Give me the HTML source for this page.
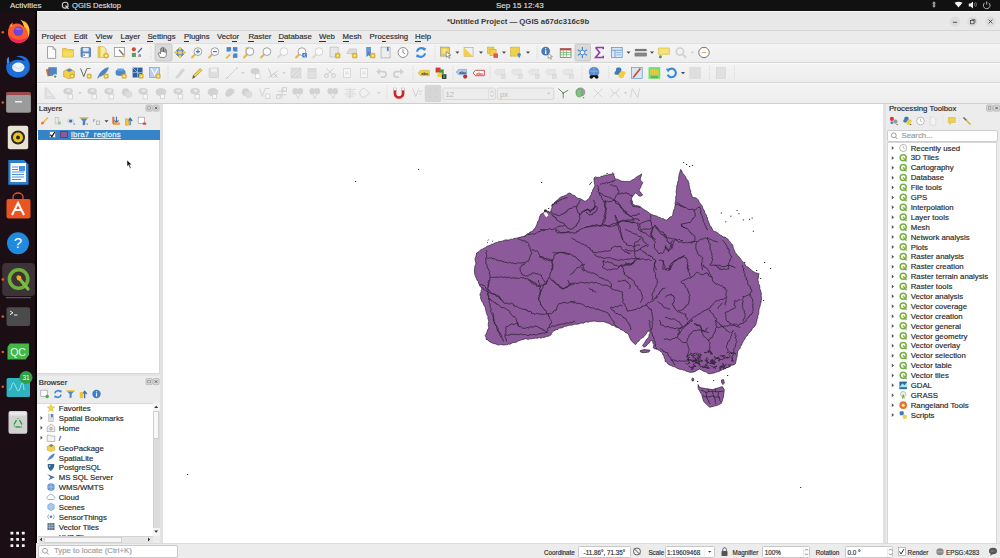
<!DOCTYPE html>
<html><head><meta charset="utf-8"><style>
*{margin:0;padding:0;box-sizing:border-box}
html,body{width:1000px;height:558px;overflow:hidden;background:#fff;font-family:"Liberation Sans",sans-serif;font-size:7.8px;color:#2a2a2a}
.a{position:absolute}
.t{position:absolute;white-space:nowrap;line-height:1;-webkit-text-stroke:0.18px currentColor}
.menu span{position:absolute;top:2.3px;white-space:nowrap;line-height:1;color:#303030;-webkit-text-stroke:0.18px currentColor}
.menu u{text-decoration:none;border-bottom:0.8px solid #303030}
</style></head><body>
<div class="a" style="left:0;top:0;width:1000px;height:11px;background:#121111"></div>
<div class="t" style="left:10px;top:1.6px;color:#e2e2e2;font-size:8px;-webkit-text-stroke:0.1px currentColor">Activities</div>
<svg class="a" style="left:61px;top:1px" width="9" height="9"><circle cx="4.2" cy="4.2" r="2.9" fill="none" stroke="#ccc" stroke-width="1.1"/><path d="M4.5,4.5 L7.5,7.8" stroke="#ccc" stroke-width="1.2"/></svg><div class="t" style="left:72px;top:1.6px;color:#e2e2e2;font-size:7.6px;-webkit-text-stroke:0.1px currentColor">QGIS Desktop</div>
<div class="t" style="left:496px;top:1.6px;color:#e2e2e2;font-size:8px;-webkit-text-stroke:0.1px currentColor">Sep 15 12:43</div>
<div class="a" style="left:0;top:11px;width:36px;height:547px;background:#1b0f15"></div><svg class="a" style="left:0;top:0" width="36" height="558" viewBox="0 0 36 558"><path d="M9.5,26 Q7.5,30 8,34 Q9,41 16,42.8 Q24,44 28,38 Q30.5,33 29,27.5 Q28,23 24,20.5 Q26,25 24,27 Q21,23 16,23.5 Q12,24 9.5,26z" fill="#ff5a2c"/><path d="M8.3,35 Q11,42 18,43 Q25,43 28.3,37 Q22,41 16,39.5 Q11,38 8.3,35z" fill="#f0245e"/><path d="M20.5,19.8 Q27.5,22 29.3,29 Q29.6,34 28.3,37 Q28,29 24,26.5 Q23,22.5 20.5,19.8z" fill="#ffc93a"/><path d="M9.5,26 Q10.5,23.5 13,22.5 Q11.5,25 12.5,27 z" fill="#ff9a2a"/><circle cx="18.3" cy="31.3" r="4.8" fill="#6a47d8"/><path d="M15,29 Q18,27 21.5,29.5 Q18.5,31 15,29z" fill="#9a6af0"/><circle cx="2.8" cy="32.2" r="1.3" fill="#e95420"/><path d="M7.5,61 Q5.5,66 6.5,70 Q8.5,77 17,77.8 Q26,78 29.5,70 Q31,62 26,57.5 Q21,54.5 16,56.5 Q22,57 25,61 Q20,59 15,60 Q10.5,61 9.5,64 Q8.5,62.5 7.5,61z" fill="#1c6fd8"/><path d="M7,63 Q6,58 9,57 Q8.5,61 10,63z" fill="#3c8ef0"/><ellipse cx="18.3" cy="67.3" rx="6.2" ry="4.8" fill="#eef2f8"/><path d="M12.5,65.5 L18.3,69 L24,65.5" stroke="#b8c8d8" stroke-width="0.7" fill="none"/><rect x="6.3" y="92" width="24.4" height="20.6" rx="2" fill="#8f8f8f"/><rect x="6.3" y="92" width="24.4" height="3.5" rx="1.5" fill="#9a4a4a"/><rect x="6.3" y="95" width="24.4" height="17.6" rx="1.5" fill="#9b9b9b"/><rect x="15" y="101" width="7" height="1.5" fill="#eee"/><circle cx="2.8" cy="102.5" r="1.3" fill="#e95420"/><rect x="7.8" y="125.8" width="20.4" height="23.5" rx="2" fill="#e9e3d4"/><circle cx="18" cy="137.5" r="7" fill="#2a2a2a"/><circle cx="18" cy="137.5" r="5" fill="#f0c419"/><circle cx="18" cy="137.5" r="2" fill="#2a2a2a"/><path d="M8.3,160 H24 L28.5,164.5 V184.7 H8.3 z" fill="#2a7fd0"/><rect x="10.5" y="163" width="15.5" height="19" fill="#fff"/><rect x="19" y="166" width="6" height="5" fill="#4a90d8"/><path d="M12,167 h6 M12,169.5 h6 M12,172 h12 M12,174.5 h12 M12,177 h12 M12,179.5 h9" stroke="#4a90d8" stroke-width="1"/><rect x="6.5" y="199" width="24" height="19.5" rx="2" fill="#e95420"/><path d="M13,199 v-2 a5,4 0 0 1 10,0 v2" stroke="#e95420" stroke-width="1.3" fill="none"/><path d="M12,215 L18,203 L24,215 M14.5,210 h7" stroke="#fff" stroke-width="2" fill="none"/><circle cx="18" cy="243.3" r="11" fill="#1f8ae0"/><text x="18" y="248" font-size="15" text-anchor="middle" fill="#fff" font-family="Liberation Sans">?</text><rect x="2.2" y="262.9" width="32.9" height="33" rx="4" fill="#3b3337"/><rect x="6" y="297.2" width="25" height="1" fill="#6a6468"/><circle cx="18.6" cy="279" r="9.2" fill="none" stroke="#6fae3a" stroke-width="3.6"/><path d="M18,277 L28,289" stroke="#7cbf3f" stroke-width="3.2" stroke-linecap="round"/><circle cx="19" cy="278" r="2.4" fill="#f7a71b"/><circle cx="2.8" cy="279.4" r="1.3" fill="#e95420"/><rect x="6.5" y="307.3" width="23.6" height="18.7" rx="2" fill="#4b4b4b"/><path d="M10,311 l3,1.8 l-3,1.8" stroke="#fff" stroke-width="0.9" fill="none"/><path d="M14,315 h3.5" stroke="#fff" stroke-width="0.9"/><circle cx="2.8" cy="316.6" r="1.3" fill="#e95420"/><path d="M10,343.5 H29 V355 L25.5,359.4 H7.5 V347 z" fill="#41b848"/><text x="18" y="355.5" font-size="10.5" text-anchor="middle" fill="#e6ffe6" font-family="Liberation Sans">QC</text><circle cx="2.8" cy="352" r="1.3" fill="#e95420"/><rect x="6.6" y="378" width="23.4" height="19" rx="1.5" fill="#2fb3c0"/><path d="M9,390 q2,0 3,-5 t3,0 t3,6 t3,-6 t3,5" stroke="#a0f0f0" stroke-width="0.8" fill="none"/><circle cx="26" cy="377.5" r="6.5" fill="#2fa045"/><text x="26" y="380" font-size="6.5" text-anchor="middle" fill="#fff" font-family="Liberation Sans">31</text><circle cx="2.8" cy="386.7" r="1.3" fill="#e95420"/><rect x="8.5" y="411" width="18.8" height="22.7" rx="2" fill="#d2d2d2"/><rect x="9.5" y="412" width="16.8" height="3.5" fill="#e8e8e8"/><path d="M16.5,420 L14,424.5 M19.5,420 L22,424.5 M15.5,427 H20.5" stroke="#2fa33a" stroke-width="1.5" fill="none"/><path d="M17,419 h2 l-1,-1.2 z M13.5,425.5 l1.5,0 l-0.7,1.6 z M21.5,426 l1,1.2 l-1.8,0.3 z" fill="#2fa33a"/><rect x="10.50" y="531.80" width="2.8" height="2.8" rx="0.5" fill="#f4f4f4"/><rect x="10.50" y="538.05" width="2.8" height="2.8" rx="0.5" fill="#f4f4f4"/><rect x="10.50" y="544.30" width="2.8" height="2.8" rx="0.5" fill="#f4f4f4"/><rect x="16.20" y="531.80" width="2.8" height="2.8" rx="0.5" fill="#f4f4f4"/><rect x="16.20" y="538.05" width="2.8" height="2.8" rx="0.5" fill="#f4f4f4"/><rect x="16.20" y="544.30" width="2.8" height="2.8" rx="0.5" fill="#f4f4f4"/><rect x="21.90" y="531.80" width="2.8" height="2.8" rx="0.5" fill="#f4f4f4"/><rect x="21.90" y="538.05" width="2.8" height="2.8" rx="0.5" fill="#f4f4f4"/><rect x="21.90" y="544.30" width="2.8" height="2.8" rx="0.5" fill="#f4f4f4"/></svg>
<div class="a" style="left:36px;top:11px;width:964px;height:547px;background:#ececec"></div>
<div class="a" style="left:36px;top:11px;width:964px;height:20px;background:#e8e8e8;border-top:1px solid #f8f8f8;border-left:1px solid #f8f8f8"></div>
<svg class="a" style="left:0;top:0" width="1000" height="32" viewBox="0 0 1000 32">
<ellipse cx="934" cy="3.2" rx="1.4" ry="1.6" fill="#999"/><ellipse cx="934" cy="5.8" rx="1.4" ry="1.6" fill="#999"/>
<path d="M954.5,2.8 Q958.5,0.8 962.5,2.8 L958.5,7.6 z" fill="#f2f2f2"/>
<path d="M968.8,3.6 h1.8 l2.4,-2 v7 l-2.4,-2 h-1.8 z" fill="#eee"/><path d="M974.2,3.2 q1,1.3 0,2.6 M975.6,2.2 q1.8,2.3 0,4.6" stroke="#bbb" stroke-width="0.6" fill="none"/>
<path d="M984.7,2.8 a3.3,3.3 0 1 0 4,0" stroke="#ddd" stroke-width="0.8" fill="none"/><path d="M986.7,1.4 v3.3" stroke="#ddd" stroke-width="0.8"/>
<circle cx="955" cy="21.5" r="5.2" fill="#dcdcdc"/><path d="M952.8,22.3 h4.4" stroke="#333" stroke-width="0.8"/>
<circle cx="972.5" cy="21.5" r="5.2" fill="#dcdcdc"/><rect x="970.6" y="20.4" width="3.4" height="3.4" fill="none" stroke="#333" stroke-width="0.7"/><path d="M971.6,19.4 h3.4 v3.4" stroke="#333" stroke-width="0.6" fill="none"/>
<circle cx="990.5" cy="21.5" r="5.2" fill="#dcdcdc"/><path d="M988.6,19.6 l3.8,3.8 M992.4,19.6 l-3.8,3.8" stroke="#333" stroke-width="0.8"/>
</svg>
<div class="t" style="left:447px;top:18px;font-weight:bold;font-size:7.75px;color:#3a3a3a;-webkit-text-stroke:0">*Untitled Project — QGIS a67dc316c9b</div>
<div class="a" style="left:36px;top:30px;width:964px;height:12.5px;background:#ebebeb;border-top:1px solid #d6d6d6"></div>
<div class="a menu" style="left:0;top:31px">
<span style="left:41.6px">Project</span>
<span style="left:74px"><u>E</u>dit</span>
<span style="left:95.6px"><u>V</u>iew</span>
<span style="left:120.6px"><u>L</u>ayer</span>
<span style="left:147.4px"><u>S</u>ettings</span>
<span style="left:184px"><u>P</u>lugins</span>
<span style="left:217px">Vect<u>o</u>r</span>
<span style="left:248.4px"><u>R</u>aster</span>
<span style="left:278.4px"><u>D</u>atabase</span>
<span style="left:319px"><u>W</u>eb</span>
<span style="left:342.6px"><u>M</u>esh</span>
<span style="left:369.6px">Pro<u>c</u>essing</span>
<span style="left:415px"><u>H</u>elp</span>
</div>
<div class="a" style="left:36px;top:42.5px;width:964px;height:20px;background:linear-gradient(#f4f4f4,#eeeeee);border-top:1px solid #e0e0e0;border-bottom:1px solid #d6d6d6"></div>
<div class="a" style="left:36px;top:62.5px;width:964px;height:20px;background:linear-gradient(#f3f3f3,#ededed);border-top:1px solid #fafafa;border-bottom:1px solid #d6d6d6"></div>
<div class="a" style="left:36px;top:82.5px;width:964px;height:21.5px;background:linear-gradient(#f3f3f3,#ededed);border-top:1px solid #fafafa;border-bottom:1px solid #cfcfcf"></div>
<div class="a" style="left:35px;top:11px;width:1.5px;height:547px;background:#050304"></div>
<svg class="a" style="left:0;top:0" width="1000" height="558" viewBox="0 0 1000 558"><rect x="155" y="44" width="17" height="17" rx="1.5" fill="#dadada" stroke="#c2c2c2" stroke-width="0.8"/><rect x="575" y="44" width="15.5" height="17" rx="1.5" fill="#dadada" stroke="#c2c2c2" stroke-width="0.8"/><g transform="translate(45.30,46.20) scale(0.9)"><path d="M2.5,0.5 h6 l3,3 v10 h-9 z" fill="#fff" stroke="#8a8a8a" stroke-width="0.9"/><path d="M8.5,0.5 v3 h3" fill="none" stroke="#8a8a8a" stroke-width="0.8"/></g><g transform="translate(61.70,46.20) scale(0.9)"><path d="M1,2.5 h4.5 l1.2,1.3 h6.3 v8.2 h-12 z" fill="#f0d04a" stroke="#d6b031" stroke-width="0.8"/><rect x="1.5" y="5.5" width="11" height="6" fill="#f5dc66"/></g><g transform="translate(79.70,46.20) scale(0.9)"><rect x="1.5" y="1.5" width="10.5" height="10.5" rx="1" fill="#5c8dc8" stroke="#3d6ca5" stroke-width="0.8"/><rect x="3.5" y="1.8" width="6.5" height="4" fill="#dfe8f3"/><rect x="3.5" y="8" width="6.5" height="4" fill="#fff"/><rect x="4.2" y="9.2" width="1.4" height="1.5" fill="#333"/></g><g transform="translate(96.70,46.20) scale(0.9)"><path d="M1.5,0.5 h6 l3,3 v9 h-9 z" fill="#f7e9a8" stroke="#c9b040" stroke-width="0.8"/><rect x="1.8" y="1" width="2.5" height="11.5" fill="#e8c53c"/><circle cx="10.5" cy="10.5" r="2.8" fill="#e9c43a" stroke="#b59520" stroke-width="0.6"/><circle cx="10.5" cy="10.5" r="1.2" fill="#fff6c0"/></g><g transform="translate(113.70,46.20) scale(0.9)"><rect x="1" y="1.5" width="11" height="10" fill="#fff" stroke="#8a8a8a" stroke-width="0.8"/><path d="M6,4 l5,6" stroke="#7a7a7a" stroke-width="1.6"/><circle cx="11" cy="11" r="1.6" fill="#e9c43a"/></g><g transform="translate(130.70,46.20) scale(0.9)"><circle cx="3.5" cy="3.5" r="2.3" fill="#d44a2a"/><rect x="1.3" y="7.5" width="4.5" height="4.5" fill="#5aa05a"/><path d="M8,7 l4.5,-5" stroke="#3a6fb0" stroke-width="1.3"/><text x="8" y="12.5" font-size="6" fill="#555" font-family="Liberation Sans">a</text></g><g transform="translate(156.70,46.20) scale(0.9)"><path d="M4,12.5 C2.5,10 1.5,8.5 2,7.5 c0.7,-0.6 1.5,0 2.3,1 V3 c0,-1.2 1.6,-1.2 1.6,0 V6.5 V2 c0,-1.2 1.7,-1.2 1.7,0 V6.5 V2.8 c0,-1.1 1.6,-1.1 1.6,0 V7 V4.3 c0,-1 1.5,-1 1.5,0 V9 c0,2 -1,3.5 -2,3.5 z" fill="#fff" stroke="#555" stroke-width="0.8"/></g><g transform="translate(173.70,46.20) scale(0.9)"><path d="M7,1 L13,7 L7,13 L1,7 z" fill="#5b8ed0" stroke="#3d6ca5" stroke-width="0.6"/><rect x="5" y="5" width="4" height="4" fill="#f2d24b"/><circle cx="7" cy="2.5" r="1.6" fill="#f2d24b"/><circle cx="2.5" cy="7" r="1.6" fill="#f2d24b"/><circle cx="11.5" cy="7" r="1.6" fill="#f2d24b"/><circle cx="7" cy="11.5" r="1.6" fill="#f2d24b"/></g><g transform="translate(190.70,46.20) scale(0.9)"><path d="M1.5,12.5 L5,9" stroke="#e2b93b" stroke-width="2.2" stroke-linecap="round"/><circle cx="8" cy="6" r="4.3" fill="#fafafa" stroke="#9a9a9a" stroke-width="1"/><path d="M5.8,6 h4.4 M8,3.8 v4.4" stroke="#3e7ad0" stroke-width="1.3"/></g><g transform="translate(207.70,46.20) scale(0.9)"><path d="M1.5,12.5 L5,9" stroke="#e2b93b" stroke-width="2.2" stroke-linecap="round"/><circle cx="8" cy="6" r="4.3" fill="#fafafa" stroke="#9a9a9a" stroke-width="1"/><path d="M5.8,6 h4.4" stroke="#3e7ad0" stroke-width="1.3"/></g><g transform="translate(225.70,46.20) scale(0.9)"><rect x="1" y="1" width="5" height="5" fill="#4f86c9"/><rect x="8" y="1" width="5" height="5" fill="#4f86c9"/><rect x="8" y="8" width="5" height="5" fill="#4f86c9"/><rect x="5" y="5" width="4" height="4" fill="#dfe9f5"/><path d="M0.5,13.5 L5,9" stroke="#e2b93b" stroke-width="2"/></g><g transform="translate(242.70,46.20) scale(0.9)"><rect x="3" y="1" width="4" height="9" fill="#f0d04a"/><path d="M1.5,12.5 L5,9" stroke="#e2b93b" stroke-width="2.2" stroke-linecap="round"/><circle cx="8" cy="6" r="4.3" fill="#fafafa" stroke="#9a9a9a" stroke-width="1"/></g><g transform="translate(259.70,46.20) scale(0.9)"><path d="M1.5,12.5 L5,9" stroke="#e2b93b" stroke-width="2.2" stroke-linecap="round"/><circle cx="8" cy="6" r="4.3" fill="#fafafa" stroke="#9a9a9a" stroke-width="1"/></g><g transform="translate(276.70,46.20) scale(0.9)"><path d="M1.5,12.5 L5,9" stroke="#d8d8d8" stroke-width="2.2" stroke-linecap="round"/><circle cx="8" cy="6" r="4.3" fill="#fafafa" stroke="#cfcfcf" stroke-width="1"/></g><g transform="translate(294.70,46.20) scale(0.9)"><path d="M1.5,12.5 L5,9" stroke="#e2b93b" stroke-width="2.2" stroke-linecap="round"/><circle cx="8" cy="6" r="4.3" fill="#fafafa" stroke="#9a9a9a" stroke-width="1"/><rect x="8.5" y="7.5" width="5" height="5" fill="#3e7ad0"/><path d="M12,8.5 l-2,1.5 l2,1.5" stroke="#fff" fill="none" stroke-width="0.8"/></g><g transform="translate(311.70,46.20) scale(0.9)"><path d="M1.5,12.5 L5,9" stroke="#d8d8d8" stroke-width="2.2" stroke-linecap="round"/><circle cx="8" cy="6" r="4.3" fill="#fafafa" stroke="#cfcfcf" stroke-width="1"/></g><g transform="translate(328.70,46.20) scale(0.9)"><rect x="1.5" y="1" width="9" height="11" fill="#e8e8e8" stroke="#bdbdbd" stroke-width="0.8"/><rect x="7.4" y="7.9" width="5.2" height="5.2" rx="0.6" fill="#e9c43a" stroke="#b59520" stroke-width="0.5"/><circle cx="10" cy="10.5" r="1" fill="#fff3b0"/></g><g transform="translate(345.70,46.20) scale(0.9)"><path d="M1,8 L4,3 L12,3 L12,9 z" fill="#dcdcdc" stroke="#bbb" stroke-width="0.6"/><rect x="7.4" y="7.9" width="5.2" height="5.2" rx="0.6" fill="#e9c43a" stroke="#b59520" stroke-width="0.5"/><circle cx="10" cy="10.5" r="1" fill="#fff3b0"/></g><g transform="translate(363.70,46.20) scale(0.9)"><path d="M3,1 h5 v11 l-2.5,-2 l-2.5,2 z" fill="#4f86c9"/><rect x="3" y="1" width="5" height="5" fill="#6a9ad6"/><rect x="7.4" y="7.9" width="5.2" height="5.2" rx="0.6" fill="#e9c43a" stroke="#b59520" stroke-width="0.5"/><circle cx="10" cy="10.5" r="1" fill="#fff3b0"/></g><g transform="translate(379.70,46.20) scale(0.9)"><rect x="1.5" y="1" width="10" height="12" fill="#eee" stroke="#aaa" stroke-width="0.8"/><path d="M8,1 v5 l1,-1 l1,1 v-5" fill="#4f86c9"/></g><g transform="translate(396.70,46.20) scale(0.9)"><circle cx="7" cy="7" r="5.5" fill="#fff" stroke="#777" stroke-width="0.9"/><path d="M7,3.5 V7 L9.5,8.5" stroke="#777" fill="none" stroke-width="0.9"/></g><g transform="translate(414.70,46.20) scale(0.9)"><path d="M2.5,6 A4.8,4.8 0 0 1 11,4" stroke="#3c8ad8" stroke-width="2.3" fill="none"/><path d="M11.5,8 A4.8,4.8 0 0 1 3,10" stroke="#3c8ad8" stroke-width="2.3" fill="none"/><path d="M9,1.5 l3.5,0.5 l-1,3.5z M5,12.5 l-3.5,-0.5 l1,-3.5z" fill="#3c8ad8"/></g><g transform="translate(439.70,46.20) scale(0.9)"><rect x="1" y="1" width="10" height="10" fill="#f0d04a" stroke="#9a9a9a" stroke-width="0.8"/><rect x="3" y="3" width="5" height="5" fill="#f7e48c"/><path d="M7,6 L12.5,10 L10,10.5 L11.5,13 L10.5,13.5 L9,11 L7.5,12.5 z" fill="#fff" stroke="#555" stroke-width="0.6"/></g><g transform="translate(462.70,46.20) scale(0.9)"><rect x="1.5" y="1.5" width="10" height="10" fill="#f0f0f0" stroke="#999" stroke-width="0.6"/><path d="M1.5,1.5 L11.5,11.5 L1.5,11.5 z" fill="#f0d04a"/></g><g transform="translate(486.70,46.20) scale(0.9)"><rect x="1" y="1" width="7" height="7" fill="#f0d04a" stroke="#c9a52a" stroke-width="0.6"/><rect x="3.5" y="3.5" width="7" height="7" fill="#f0d04a" stroke="#c9a52a" stroke-width="0.6"/><rect x="7.5" y="8" width="5" height="5" fill="#e05555"/></g><g transform="translate(509.70,46.20) scale(0.9)"><rect x="1" y="1" width="10" height="10" fill="#f0d04a" stroke="#c9a52a" stroke-width="0.6"/><path d="M10.5,13.5 L8.5,9.5 a2,2 0 1 1 4,0 z" fill="#4f86c9"/></g><g transform="translate(540.70,46.20) scale(0.9)"><circle cx="5.5" cy="5.5" r="4.8" fill="#4878b8"/><rect x="4.8" y="4.5" width="1.5" height="4.2" fill="#fff"/><circle cx="5.5" cy="2.9" r="0.8" fill="#fff"/><path d="M8,8 L13,11.5 L10.8,11.8 L12,14 L11,14.5 L9.8,12.3 L8.4,13.6 z" fill="#fff" stroke="#555" stroke-width="0.55"/></g><g transform="translate(559.30,46.20) scale(0.9)"><rect x="1" y="2.5" width="12" height="10" fill="#fff" stroke="#555" stroke-width="0.7"/><rect x="1" y="2.5" width="12" height="2.2" fill="#cc4444"/><path d="M1,7 h12 M1,9.5 h12 M4.5,4.7 v7.8 M8,4.7 v7.8" stroke="#5a5" stroke-width="0.7"/></g><g transform="translate(576.10,46.20) scale(0.9)"><g stroke="#3c8ad8" stroke-width="1.3" fill="none"><path d="M7,1 V13 M1.8,4 L12.2,10 M1.8,10 L12.2,4"/></g><circle cx="7" cy="7" r="2.5" fill="#fff" stroke="#3c8ad8" stroke-width="1"/></g><g transform="translate(593.30,46.20) scale(0.9)"><path d="M2.5,1.5 H11 V3.5 M2.5,1.5 L7,7 L2.5,12.5 H11 V10.5" fill="none" stroke="#8e3ea8" stroke-width="1.8" stroke-linejoin="miter"/></g><g transform="translate(610.50,46.20) scale(0.9)"><rect x="1" y="1.5" width="12" height="11" fill="#d8e6f5" stroke="#5b8ed0" stroke-width="0.8"/><path d="M1,4.5 h12 M5,4.5 v8" stroke="#5b8ed0" stroke-width="0.8"/><path d="M6.5,7 h5 M6.5,9.5 h5" stroke="#7aa0d5" stroke-width="0.8"/></g><g transform="translate(634.50,46.20) scale(0.9)"><rect x="0.5" y="3" width="13" height="2.5" fill="#777"/><rect x="0.5" y="7.5" width="13" height="3.5" fill="#888" stroke="#666" stroke-width="0.5"/></g><g transform="translate(657.70,46.20) scale(0.9)"><path d="M1,2 h12 v7 h-8 l-2.5,2.5 v-2.5 h-1.5 z" fill="#f4e27a" stroke="#d5bb3a" stroke-width="0.7"/><circle cx="3" cy="12" r="1.6" fill="#4a9a4a"/></g><g transform="translate(674.50,46.20) scale(0.9)"><circle cx="6" cy="6" r="4" fill="none" stroke="#d0d0d0" stroke-width="1.8"/><path d="M9,9 L13,13" stroke="#d0d0d0" stroke-width="2"/></g><g transform="translate(697.70,46.20) scale(0.9)"><circle cx="7" cy="7" r="5.8" fill="#fff" stroke="#555" stroke-width="0.9"/><path d="M4.5,7 h5" stroke="#e08a3a" stroke-width="0.9"/></g><path d="M455.4,51.5 h4 l-2,2.2 z" fill="#444"/><path d="M479,51.5 h4 l-2,2.2 z" fill="#444"/><path d="M502,51.5 h4 l-2,2.2 z" fill="#444"/><path d="M526,51.5 h4 l-2,2.2 z" fill="#444"/><path d="M626.5,51.5 h4 l-2,2.2 z" fill="#444"/><path d="M650,51.5 h4 l-2,2.2 z" fill="#444"/><path d="M690.9,51.7 h3.2 l-1.6,1.8 z" fill="#c4c4c4"/><path d="M151,46 V59" stroke="#d6d6d6" stroke-width="1" stroke-dasharray="1,1"/><path d="M435,46 V59" stroke="#d6d6d6" stroke-width="1" stroke-dasharray="1,1"/><path d="M537,46 V59" stroke="#d6d6d6" stroke-width="1" stroke-dasharray="1,1"/><g transform="translate(45.70,66.70) scale(0.9)"><rect x="1" y="2" width="8" height="8" fill="#e06b2c" transform="rotate(-15 5 6)"/><rect x="3.5" y="1" width="8.5" height="8.5" fill="#4f86c9" stroke="#3a6aa8" stroke-width="0.5"/><circle cx="10.5" cy="11" r="2.5" fill="#fff"/><path d="M9,11 h3 M10.5,9.5 v3" stroke="#3a9a3a" stroke-width="1.1"/></g><g transform="translate(62.70,66.70) scale(0.9)"><path d="M1,5 L7,2 L13,5 V11 L7,13.5 L1,11 z" fill="#f0d04a" stroke="#b59520" stroke-width="0.6"/><path d="M4,4 L8,2 L11,4 L7,6 z" fill="#4f86c9"/><rect x="8.3" y="8.3" width="4.4" height="4.4" rx="0.6" fill="#e9c43a" stroke="#b59520" stroke-width="0.5"/><circle cx="10.5" cy="10.5" r="1" fill="#fff3b0"/></g><g transform="translate(79.70,66.70) scale(0.9)"><path d="M1,2 L4.5,11 L8,2" fill="none" stroke="#555" stroke-width="1"/><path d="M8,2 h4" stroke="#555" stroke-width="0.8"/><rect x="8.2" y="8.2" width="4.6" height="4.6" rx="0.6" fill="#e9c43a" stroke="#b59520" stroke-width="0.5"/><circle cx="10.5" cy="10.5" r="1" fill="#fff3b0"/></g><g transform="translate(96.70,66.70) scale(0.9)"><path d="M1,13 C3,7 7,2 13,1 C12,6 8,10 3,11 z" fill="#4f86c9" stroke="#3a6aa8" stroke-width="0.5"/><rect x="8.2" y="8.2" width="4.6" height="4.6" rx="0.6" fill="#e9c43a" stroke="#b59520" stroke-width="0.5"/><circle cx="10.5" cy="10.5" r="1" fill="#fff3b0"/></g><g transform="translate(114.70,66.70) scale(0.9)"><rect x="1" y="3" width="11" height="7" rx="3" fill="#4f86c9"/><rect x="3" y="2" width="7" height="3" fill="#6aa0e0"/><rect x="8.2" y="8.2" width="4.6" height="4.6" rx="0.6" fill="#e9c43a" stroke="#b59520" stroke-width="0.5"/><circle cx="10.5" cy="10.5" r="1" fill="#fff3b0"/></g><g transform="translate(131.70,66.70) scale(0.9)"><rect x="1" y="1" width="11" height="11" fill="#2f5f9a"/><path d="M1,6.5 h11 M6.5,1 v11 M1,1 L12,12" stroke="#a8c8ee" stroke-width="0.8"/><rect x="8.2" y="8.2" width="4.6" height="4.6" rx="0.6" fill="#e9c43a" stroke="#b59520" stroke-width="0.5"/><circle cx="10.5" cy="10.5" r="1" fill="#fff3b0"/></g><g transform="translate(148.70,66.70) scale(0.9)"><rect x="1" y="1" width="11" height="11" fill="#b8d0ee" stroke="#5b8ed0" stroke-width="0.6"/><path d="M3,2 L6.5,9 L10,2" stroke="#fff" stroke-width="1.2" fill="none"/><rect x="8.2" y="8.2" width="4.6" height="4.6" rx="0.6" fill="#e9c43a" stroke="#b59520" stroke-width="0.5"/><circle cx="10.5" cy="10.5" r="1" fill="#fff3b0"/></g><g transform="translate(173.70,66.70) scale(0.9)"><path d="M2,12 L10,2 L12,4 L4,13 z" fill="#d8d8d8" stroke="#c8c8c8" stroke-width="0.5"/><path d="M5,12 L12,4" stroke="#cfcfcf" stroke-width="0.8"/></g><g transform="translate(190.70,66.70) scale(0.9)"><path d="M2,13 L3,9.5 L10.5,2 L12.5,4 L5,11.5 z" fill="#f0d04a" stroke="#8a7a2a" stroke-width="0.6"/><path d="M2,13 L3,9.5 L5,11.5 z" fill="#555"/></g><g transform="translate(207.70,66.70) scale(0.9)"><rect x="1.5" y="1.5" width="10.5" height="10.5" rx="1" fill="#dedede" stroke="#cdcdcd" stroke-width="0.8"/><rect x="3.5" y="2" width="6.5" height="3.5" fill="#f2f2f2"/></g><g transform="translate(225.70,66.70) scale(0.9)"><path d="M1,13 L13,1" stroke="#d0d0d0" stroke-width="1"/><circle cx="1.5" cy="12.5" r="1" fill="#ccc"/><circle cx="12.5" cy="1.5" r="1" fill="#ccc"/></g><g transform="translate(249.70,66.70) scale(0.9)"><ellipse cx="6" cy="5" rx="5" ry="3.5" fill="#d2d2d2"/><rect x="6.5" y="8" width="5" height="5" fill="#fff" stroke="#d2d2d2" stroke-width="0.9"/></g><g transform="translate(266.70,66.70) scale(0.9)"><path d="M2,2 L6,12 M2,12 L12,5 M8,8 L12,12 M8,12 L12,8" stroke="#c8c8c8" stroke-width="1.1"/></g><g transform="translate(289.70,66.70) scale(0.9)"><rect x="1.5" y="1.5" width="11" height="11" fill="#e0e0e0" stroke="#cdcdcd" stroke-width="0.6"/><path d="M2,12 L12,2 M2,7 L7,2 M7,12 L12,7" stroke="#c9c9c9" stroke-width="0.8"/></g><g transform="translate(305.70,66.70) scale(0.9)"><rect x="2" y="1.5" width="10" height="3" fill="#d8d8d8"/><rect x="2.5" y="5" width="9" height="8" fill="#e2e2e2" stroke="#cccccc" stroke-width="0.6"/></g><g transform="translate(323.70,66.70) scale(0.9)"><circle cx="3" cy="10" r="2" fill="none" stroke="#cfcfcf" stroke-width="1.2"/><circle cx="11" cy="10" r="2" fill="none" stroke="#cfcfcf" stroke-width="1.2"/><path d="M4,8.5 L11,2 M10,8.5 L3,2" stroke="#cfcfcf" stroke-width="1.1"/></g><g transform="translate(340.70,66.70) scale(0.9)"><rect x="3" y="2" width="8" height="10" fill="#f6f6f6" stroke="#d0d0d0" stroke-width="0.8"/><path d="M5,6 h4 M5,8 h4" stroke="#d8d8d8"/></g><g transform="translate(357.70,66.70) scale(0.9)"><rect x="3" y="2" width="8" height="10" fill="#f6f6f6" stroke="#d0d0d0" stroke-width="0.8"/><path d="M5,6 h4 M5,8 h4" stroke="#d8d8d8"/></g><g transform="translate(375.30,66.70) scale(0.9)"><g><path d="M3.5,5.5 H9 A3,3 0 0 1 9,11.5 H6" stroke="#d0d0d0" stroke-width="2" fill="none"/><path d="M1,5.5 L5,2 V9 z" fill="#d0d0d0"/></g></g><g transform="translate(392.10,66.70) scale(0.9)"><g transform="translate(14,0) scale(-1,1)"><path d="M3.5,5.5 H9 A3,3 0 0 1 9,11.5 H6" stroke="#d0d0d0" stroke-width="2" fill="none"/><path d="M1,5.5 L5,2 V9 z" fill="#d0d0d0"/></g></g><g transform="translate(417.70,66.70) scale(0.9)"><path d="M0.5,7 L3,4 H13 V10 H3 z" fill="#f0d04a" stroke="#c9a52a" stroke-width="0.5"/><text x="4" y="9" font-size="4.5" font-weight="bold" fill="#333" font-family="Liberation Sans">abc</text></g><g transform="translate(434.70,66.70) scale(0.9)"><rect x="1" y="1" width="5.5" height="5.5" fill="#d43a2a"/><rect x="5" y="3" width="5" height="5" fill="#3a9a3a"/><rect x="3" y="6.5" width="5" height="5" fill="#f0d04a"/><rect x="8" y="8.5" width="5" height="5" fill="#222"/><rect x="9" y="9.5" width="3" height="3" fill="#3a9a3a"/></g><g transform="translate(455.70,66.70) scale(0.9)"><path d="M0.5,6 L3,3 H12 V9 H3 z" fill="#a8c8ee" stroke="#5b8ed0" stroke-width="0.5"/><text x="4" y="8" font-size="4.5" font-weight="bold" fill="#333" font-family="Liberation Sans">abc</text><circle cx="10.5" cy="11" r="2.3" fill="#c0302a"/></g><g transform="translate(472.70,66.70) scale(0.9)"><path d="M0.5,7 L3,4 H13 V10 H3 z" fill="#fff" stroke="#d04040" stroke-width="1"/><text x="4" y="9" font-size="4.5" font-weight="bold" fill="#d04040" font-family="Liberation Sans">abc</text></g><g transform="translate(493.70,66.70) scale(0.9)"><path d="M0.5,6 L3,3 H12 V9 H3 z" fill="#e6e6e6" stroke="#d5d5d5" stroke-width="0.5"/><rect x="8.5" y="8.5" width="4.5" height="4.5" fill="#e0e0e0" stroke="#d0d0d0" stroke-width="0.5"/></g><g transform="translate(510.70,66.70) scale(0.9)"><path d="M0.5,6 L3,3 H12 V9 H3 z" fill="#e6e6e6" stroke="#d5d5d5" stroke-width="0.5"/><rect x="8.5" y="8.5" width="4.5" height="4.5" fill="#e0e0e0" stroke="#d0d0d0" stroke-width="0.5"/></g><g transform="translate(527.70,66.70) scale(0.9)"><path d="M0.5,6 L3,3 H12 V9 H3 z" fill="#e6e6e6" stroke="#d5d5d5" stroke-width="0.5"/><rect x="8.5" y="8.5" width="4.5" height="4.5" fill="#e0e0e0" stroke="#d0d0d0" stroke-width="0.5"/></g><g transform="translate(544.70,66.70) scale(0.9)"><path d="M0.5,6 L3,3 H12 V9 H3 z" fill="#e6e6e6" stroke="#d5d5d5" stroke-width="0.5"/><rect x="8.5" y="8.5" width="4.5" height="4.5" fill="#e0e0e0" stroke="#d0d0d0" stroke-width="0.5"/></g><g transform="translate(561.70,66.70) scale(0.9)"><path d="M0.5,6 L3,3 H12 V9 H3 z" fill="#e6e6e6" stroke="#d5d5d5" stroke-width="0.5"/><rect x="8.5" y="8.5" width="4.5" height="4.5" fill="#e0e0e0" stroke="#d0d0d0" stroke-width="0.5"/></g><g transform="translate(587.70,66.70) scale(0.9)"><circle cx="7" cy="6" r="5.5" fill="#5b8ed0" stroke="#3a6aa8" stroke-width="0.5"/><path d="M2,5 h10 M7,0.5 v11" stroke="#a8c8ee" stroke-width="0.6"/><circle cx="4" cy="11.5" r="2" fill="#111"/><circle cx="10" cy="11.5" r="2" fill="#111"/><rect x="4" y="9.5" width="6" height="2" fill="#111"/></g><g transform="translate(613.70,66.70) scale(0.9)"><path d="M7,1 H4.5 A2,2 0 0 0 2.5,3 V6.5 H7.5 V7.5 H2.5 A2,2 0 0 0 1,9.5 V10" fill="none"/><rect x="2.5" y="1" width="6" height="6" rx="2" fill="#3d78b8"/><rect x="1" y="5" width="6" height="4" rx="1.5" fill="#3d78b8"/><rect x="5.5" y="6.5" width="6" height="6" rx="2" fill="#f0cf3a"/><rect x="7" y="5" width="6" height="4" rx="1.5" fill="#f0cf3a"/></g><g transform="translate(630.50,66.70) scale(0.9)"><rect x="1" y="1" width="12" height="12" fill="#d8e6f5" stroke="#5b8ed0" stroke-width="0.7"/><path d="M3,12 L11,2" stroke="#c8542a" stroke-width="2"/></g><g transform="translate(648.10,66.70) scale(0.9)"><rect x="0.5" y="0.5" width="13" height="13" fill="#6ee06e"/><rect x="2.5" y="3" width="9" height="6" fill="#f0d04a"/><path d="M3,11.5 h8" stroke="#555" stroke-width="0.8"/><path d="M4,3 v6 M6,3 v6 M8,3 v6 M10,3 v6" stroke="#c9a52a" stroke-width="0.5"/></g><g transform="translate(664.90,66.70) scale(0.9)"><path d="M3,9 A4.8,4.8 0 1 0 4,3.5" stroke="#3c8ad8" stroke-width="2.4" fill="none"/><path d="M1,2 L6,2.5 L3.5,6.5 z" fill="#3c8ad8"/></g><g transform="translate(688.90,66.70) scale(0.9)"><rect x="1" y="1" width="12" height="12" fill="#dedede" stroke="#d0d0d0" stroke-width="0.5"/></g><g transform="translate(714.50,66.70) scale(0.9)"><rect x="2" y="1" width="10" height="12" fill="#e0e0e0" stroke="#cfcfcf" stroke-width="0.6"/></g><path d="M241.4,72.2 h3.2 l-1.6,1.8 z" fill="#c4c4c4"/><path d="M282.4,72.2 h3.2 l-1.6,1.8 z" fill="#c4c4c4"/><path d="M681,72 h4 l-2,2.2 z" fill="#444"/><path d="M168,66 V80" stroke="#d6d6d6" stroke-width="1" stroke-dasharray="1,1"/><path d="M413,66 V80" stroke="#d6d6d6" stroke-width="1" stroke-dasharray="1,1"/><path d="M453,66 V80" stroke="#d6d6d6" stroke-width="1" stroke-dasharray="1,1"/><path d="M490,66 V80" stroke="#d6d6d6" stroke-width="1" stroke-dasharray="1,1"/><path d="M582,66 V80" stroke="#d6d6d6" stroke-width="1" stroke-dasharray="1,1"/><path d="M608.8,66 V80" stroke="#d6d6d6" stroke-width="1" stroke-dasharray="1,1"/><path d="M709.6,66 V80" stroke="#d6d6d6" stroke-width="1" stroke-dasharray="1,1"/><path d="M734.4,66 V80" stroke="#d6d6d6" stroke-width="1" stroke-dasharray="1,1"/><g transform="translate(43.70,86.70) scale(0.9)"><path d="M1.5,1 V13 H13 z" fill="#eaeaea" stroke="#cfcfcf" stroke-width="0.8"/><path d="M3,1 L12,12 M3,3 V11 H11" fill="none" stroke="#d4d4d4" stroke-width="0.8"/></g><g transform="translate(62.70,86.70) scale(0.9)"><ellipse cx="6" cy="5" rx="5.2" ry="3.6" fill="#d2d2d2"/><ellipse cx="6.5" cy="4.5" rx="2.5" ry="1.6" fill="#e6e6e6"/><rect x="6" y="8.5" width="5" height="5" fill="#f8f8f8" stroke="#d2d2d2" stroke-width="0.9"/></g><g transform="translate(86.70,86.70) scale(0.9)"><ellipse cx="6" cy="5" rx="5.2" ry="3.6" fill="#d2d2d2"/><ellipse cx="6.5" cy="4.5" rx="2.5" ry="1.6" fill="#e6e6e6"/><rect x="6" y="8.5" width="5" height="5" fill="#f8f8f8" stroke="#d2d2d2" stroke-width="0.9"/></g><g transform="translate(103.70,86.70) scale(0.9)"><ellipse cx="6" cy="5" rx="5.2" ry="3.6" fill="#d2d2d2"/><ellipse cx="6.5" cy="4.5" rx="2.5" ry="1.6" fill="#e6e6e6"/><rect x="6" y="8.5" width="5" height="5" fill="#f8f8f8" stroke="#d2d2d2" stroke-width="0.9"/></g><g transform="translate(120.70,86.70) scale(0.9)"><circle cx="5.5" cy="6" r="4.3" fill="#d2d2d2"/><circle cx="9" cy="8.5" r="4" fill="#dcdcdc"/></g><g transform="translate(137.70,86.70) scale(0.9)"><ellipse cx="6" cy="5" rx="5.2" ry="3.6" fill="#d2d2d2"/><ellipse cx="6.5" cy="4.5" rx="2.5" ry="1.6" fill="#e6e6e6"/><rect x="6" y="8.5" width="5" height="5" fill="#f8f8f8" stroke="#d2d2d2" stroke-width="0.9"/></g><g transform="translate(154.70,86.70) scale(0.9)"><ellipse cx="7" cy="6" rx="6" ry="4.5" fill="#d2d2d2"/><rect x="6.5" y="8.5" width="4.5" height="4.5" fill="#f8f8f8" stroke="#d2d2d2" stroke-width="0.9"/></g><g transform="translate(172.70,86.70) scale(0.9)"><ellipse cx="6" cy="5" rx="5.2" ry="3.6" fill="#d2d2d2"/><ellipse cx="6.5" cy="4.5" rx="2.5" ry="1.6" fill="#e6e6e6"/><rect x="6" y="8.5" width="5" height="5" fill="#f8f8f8" stroke="#d2d2d2" stroke-width="0.9"/></g><g transform="translate(189.70,86.70) scale(0.9)"><ellipse cx="6" cy="5" rx="5.2" ry="3.6" fill="#d2d2d2"/><ellipse cx="6.5" cy="4.5" rx="2.5" ry="1.6" fill="#e6e6e6"/><rect x="6" y="8.5" width="5" height="5" fill="#f8f8f8" stroke="#d2d2d2" stroke-width="0.9"/></g><g transform="translate(206.70,86.70) scale(0.9)"><ellipse cx="7" cy="6" rx="6" ry="4.5" fill="#d2d2d2"/><rect x="6.5" y="8.5" width="4.5" height="4.5" fill="#f8f8f8" stroke="#d2d2d2" stroke-width="0.9"/></g><g transform="translate(223.70,86.70) scale(0.9)"><path d="M2,10 C1,5 5,1 9,2 C13,3 13,7 10,8 C8,9 7,13 2,10 z" fill="#d2d2d2"/></g><g transform="translate(240.70,86.70) scale(0.9)"><circle cx="5.5" cy="6" r="4.3" fill="#d2d2d2"/><circle cx="9" cy="8.5" r="4" fill="#dcdcdc"/></g><g transform="translate(258.70,86.70) scale(0.9)"><path d="M1,2 L4,11 L7,2 H12" stroke="#cfcfcf" stroke-width="1" fill="none"/><rect x="7.5" y="8" width="5" height="5" fill="#f4f4f4" stroke="#cfcfcf" stroke-width="0.8"/></g><g transform="translate(275.70,86.70) scale(0.9)"><path d="M7,1 V13 M2,5 H12 M2,9 H12" stroke="#cfcfcf" stroke-width="1"/><rect x="1" y="9" width="4" height="4" fill="none" stroke="#cfcfcf"/><rect x="8" y="1" width="4" height="4" fill="none" stroke="#cfcfcf"/></g><g transform="translate(291.70,86.70) scale(0.9)"><ellipse cx="4" cy="5" rx="3.2" ry="3.6" fill="#d2d2d2"/><ellipse cx="9.5" cy="5" rx="3.2" ry="3.6" fill="#d2d2d2"/><path d="M5,9 L7,13 L9,9" stroke="#d2d2d2" stroke-width="1" fill="none"/></g><g transform="translate(308.70,86.70) scale(0.9)"><ellipse cx="4" cy="5" rx="3.2" ry="3.6" fill="#d2d2d2"/><ellipse cx="9.5" cy="5" rx="3.2" ry="3.6" fill="#d2d2d2"/><path d="M5,9 L7,13 L9,9" stroke="#d2d2d2" stroke-width="1" fill="none"/></g><g transform="translate(326.70,86.70) scale(0.9)"><ellipse cx="4" cy="5" rx="3.2" ry="3.6" fill="#d2d2d2"/><ellipse cx="9.5" cy="5" rx="3.2" ry="3.6" fill="#d2d2d2"/><path d="M5,9 L7,13 L9,9" stroke="#d2d2d2" stroke-width="1" fill="none"/></g><g transform="translate(343.70,86.70) scale(0.9)"><path d="M1,3 H13 M3,5.5 H11 M1,8 H13 M3,10.5 H11 M7,1 V13" stroke="#d2d2d2" stroke-width="0.9"/></g><g transform="translate(360.70,86.70) scale(0.9)"><path d="M4,12 A5,5 0 0 1 4,2 L10,7 z" fill="none" stroke="#d0d0d0" stroke-width="1"/></g><g transform="translate(392.70,86.70) scale(0.9)"><path d="M2.5,3 V7.5 A4.5,4.5 0 0 0 11.5,7.5 V3" stroke="#c8282a" stroke-width="3" fill="none"/><rect x="1" y="1.5" width="3" height="2.5" fill="#fff" stroke="#999" stroke-width="0.4"/><rect x="10" y="1.5" width="3" height="2.5" fill="#fff" stroke="#999" stroke-width="0.4"/></g><g transform="translate(411.70,86.70) scale(0.9)"><path d="M1,2 L4.5,11 L8,2 M8,5 H12 M8,8 H11" stroke="#cfcfcf" stroke-width="1" fill="none"/></g><g transform="translate(556.90,86.70) scale(0.9)"><path d="M7,13 V7 L1.5,2 M7,7 L12.5,4" stroke="#6a8a6a" stroke-width="1.1" fill="none"/><circle cx="7" cy="7" r="1" fill="#4aaa4a"/></g><g transform="translate(573.70,86.70) scale(0.9)"><ellipse cx="7.5" cy="6" rx="5.5" ry="5" fill="#9aa0a0"/><ellipse cx="6" cy="7" rx="3.2" ry="4.5" fill="#7ac87a" stroke="#4a8a4a" stroke-width="0.5"/><path d="M10,12 l2,0 l-1,1.2z" fill="#333"/></g><g transform="translate(591.70,86.70) scale(0.9)"><path d="M2,2 L12,12 M12,2 L2,12" stroke="#d6d6d6" stroke-width="1.1"/></g><g transform="translate(608.50,86.70) scale(0.9)"><path d="M2,2 L6,7 L2,12 M12,2 L8,7 L12,12 M5,7 H9" stroke="#d2d2d2" stroke-width="1.1" fill="none"/></g><g transform="translate(628.70,86.70) scale(0.9)"><path d="M2,12 L4,2 L10,12 L12,2" stroke="#d2d2d2" stroke-width="1.1" fill="none"/></g><path d="M78.4,92.2 h3.2 l-1.6,1.8 z" fill="#c4c4c4"/><path d="M377.4,92.2 h3.2 l-1.6,1.8 z" fill="#c4c4c4"/><path d="M624.0,92.2 h3.2 l-1.6,1.8 z" fill="#c4c4c4"/><path d="M387,86 V100" stroke="#d6d6d6" stroke-width="1" stroke-dasharray="1,1"/><rect x="425.2" y="85.5" width="15.6" height="16" rx="1.5" fill="#d6d6d6" stroke="#cdcdcd" stroke-width="0.6"/><circle cx="430" cy="90" r="0.5" fill="#bbb"/><circle cx="436" cy="90" r="0.5" fill="#bbb"/><circle cx="430" cy="97" r="0.5" fill="#bbb"/><circle cx="436" cy="97" r="0.5" fill="#bbb"/><rect x="442.8" y="88" width="52.5" height="11.5" rx="1.5" fill="#ececec" stroke="#d2d2d2" stroke-width="0.8"/><path d="M488.5,88.5 V99" stroke="#d8d8d8" stroke-width="0.6"/><path d="M490.2,92.6 l1.6,-1.8 l1.6,1.8 M490.2,95 l1.6,1.8 l1.6,-1.8" stroke="#b8b8b8" stroke-width="0.7" fill="none"/><text x="445.5" y="96.8" font-size="7.8" fill="#b8b8b8" font-family="Liberation Sans">12</text><rect x="497.3" y="88" width="56.5" height="11.5" rx="1.5" fill="#ececec" stroke="#d2d2d2" stroke-width="0.8"/><path d="M547,92.8 h3.4 l-1.7,1.8 z" fill="#c4c4c4"/><text x="500" y="96.8" font-size="7.8" fill="#b8b8b8" font-family="Liberation Sans">px</text></svg>
<div class="a" style="left:37px;top:104px;width:126px;height:439px;background:#ececec"></div><div class="a" style="left:160px;top:104px;width:3px;height:439px;background:#e2e2e2"></div><div class="t" style="left:38.8px;top:105.3px;font-size:7.8px;color:#2b2b2b;">Layers</div><div class="a" style="left:37px;top:129.5px;width:123px;height:244px;background:#fff;border:0.5px solid #d8d8d8;border-left:0"></div><div class="a" style="left:37.5px;top:130px;width:122px;height:9.6px;background:#3584c9"></div><div class="a" style="left:49px;top:131px;width:7px;height:7px;background:#fff;border:0.5px solid #888"></div><svg class="a" style="left:49px;top:131px" width="7" height="7"><path d="M1.3,3.6 l1.6,2 l2.9,-4.6" stroke="#111" stroke-width="1.2" fill="none"/></svg><div class="a" style="left:60px;top:131px;width:7.5px;height:7px;background:#8c5a9b;border:0.5px solid #6a4078"></div><div class="t" style="left:71px;top:131px;font-size:7.8px;color:#d8ecfa;text-decoration:underline;letter-spacing:0.2px;-webkit-text-stroke:0.3px currentColor">lbra7_regions</div><div class="a" style="left:37px;top:374px;width:123px;height:2px;background:#e4e4e4"></div><div class="t" style="left:38.7px;top:379.2px;font-size:7.8px;color:#2b2b2b;">Browser</div><div class="a" style="left:37px;top:402.5px;width:123px;height:141px;background:#fff;border:0.5px solid #d8d8d8;border-left:0"></div><div class="a" style="left:152.5px;top:403px;width:7px;height:133px;background:#dcdcdc;border-left:0.5px solid #d0d0d0"></div><div class="a" style="left:152.5px;top:403px;width:7px;height:8px;background:#f4f4f4"></div><div class="a" style="left:152.5px;top:528px;width:7px;height:8px;background:#f4f4f4"></div><div class="a" style="left:153.3px;top:411px;width:6.2px;height:28px;background:#f8f8f8;border:0.5px solid #cfcfcf"></div><div class="a" style="left:38px;top:536px;width:115px;height:7px;background:#e6e6e6;border-top:0.5px solid #d4d4d4"></div><div class="a" style="left:44px;top:536.5px;width:78px;height:6px;background:#f6f6f6;border:0.5px solid #d0d0d0"></div><div class="a" style="left:153px;top:536px;width:6.5px;height:7px;background:#ececec"></div><div class="t" style="left:58.7px;top:405.2px;font-size:7.8px;color:#2b2b2b;">Favorites</div><div class="t" style="left:58.7px;top:415.08px;font-size:7.8px;color:#2b2b2b;">Spatial Bookmarks</div><div class="t" style="left:58.7px;top:424.96px;font-size:7.8px;color:#2b2b2b;">Home</div><div class="t" style="left:58.7px;top:434.84px;font-size:7.8px;color:#2b2b2b;">/</div><div class="t" style="left:58.7px;top:444.71999999999997px;font-size:7.8px;color:#2b2b2b;">GeoPackage</div><div class="t" style="left:58.7px;top:454.6px;font-size:7.8px;color:#2b2b2b;">SpatiaLite</div><div class="t" style="left:58.7px;top:464.48px;font-size:7.8px;color:#2b2b2b;">PostgreSQL</div><div class="t" style="left:58.7px;top:474.36px;font-size:7.8px;color:#2b2b2b;">MS SQL Server</div><div class="t" style="left:58.7px;top:484.24px;font-size:7.8px;color:#2b2b2b;">WMS/WMTS</div><div class="t" style="left:58.7px;top:494.12px;font-size:7.8px;color:#2b2b2b;">Cloud</div><div class="t" style="left:58.7px;top:504.0px;font-size:7.8px;color:#2b2b2b;">Scenes</div><div class="t" style="left:58.7px;top:513.88px;font-size:7.8px;color:#2b2b2b;">SensorThings</div><div class="t" style="left:58.7px;top:523.76px;font-size:7.8px;color:#2b2b2b;">Vector Tiles</div><div class="a" style="left:38px;top:532.5px;width:114.5px;height:3.5px;overflow:hidden"><div class="t" style="left:20.7px;top:1.5px">XYZ Tiles</div></div><div class="a" style="left:883px;top:104px;width:3px;height:439px;background:#e2e2e2"></div><div class="t" style="left:888.9px;top:105.3px;font-size:7.8px;color:#2b2b2b;">Processing Toolbox</div><div class="a" style="left:886.5px;top:141.5px;width:110.5px;height:402px;background:#fff;border:0.5px solid #d8d8d8"></div><div class="a" style="left:887px;top:130px;width:111px;height:12px;background:#fff;border:0.8px solid #cdcdcd;border-radius:2px"></div><div class="t" style="left:901.5px;top:132.3px;font-size:7.8px;color:#9a9a9a;">Search...</div><div class="t" style="left:910.7px;top:144.6px;font-size:7.8px;color:#2b2b2b;">Recently used</div><div class="t" style="left:910.7px;top:154.49px;font-size:7.8px;color:#2b2b2b;">3D Tiles</div><div class="t" style="left:910.7px;top:164.38px;font-size:7.8px;color:#2b2b2b;">Cartography</div><div class="t" style="left:910.7px;top:174.26999999999998px;font-size:7.8px;color:#2b2b2b;">Database</div><div class="t" style="left:910.7px;top:184.16px;font-size:7.8px;color:#2b2b2b;">File tools</div><div class="t" style="left:910.7px;top:194.05px;font-size:7.8px;color:#2b2b2b;">GPS</div><div class="t" style="left:910.7px;top:203.94px;font-size:7.8px;color:#2b2b2b;">Interpolation</div><div class="t" style="left:910.7px;top:213.82999999999998px;font-size:7.8px;color:#2b2b2b;">Layer tools</div><div class="t" style="left:910.7px;top:223.72px;font-size:7.8px;color:#2b2b2b;">Mesh</div><div class="t" style="left:910.7px;top:233.61px;font-size:7.8px;color:#2b2b2b;">Network analysis</div><div class="t" style="left:910.7px;top:243.5px;font-size:7.8px;color:#2b2b2b;">Plots</div><div class="t" style="left:910.7px;top:253.39px;font-size:7.8px;color:#2b2b2b;">Raster analysis</div><div class="t" style="left:910.7px;top:263.28px;font-size:7.8px;color:#2b2b2b;">Raster creation</div><div class="t" style="left:910.7px;top:273.16999999999996px;font-size:7.8px;color:#2b2b2b;">Raster terrain analysis</div><div class="t" style="left:910.7px;top:283.06px;font-size:7.8px;color:#2b2b2b;">Raster tools</div><div class="t" style="left:910.7px;top:292.95000000000005px;font-size:7.8px;color:#2b2b2b;">Vector analysis</div><div class="t" style="left:910.7px;top:302.84000000000003px;font-size:7.8px;color:#2b2b2b;">Vector coverage</div><div class="t" style="left:910.7px;top:312.73px;font-size:7.8px;color:#2b2b2b;">Vector creation</div><div class="t" style="left:910.7px;top:322.62px;font-size:7.8px;color:#2b2b2b;">Vector general</div><div class="t" style="left:910.7px;top:332.51px;font-size:7.8px;color:#2b2b2b;">Vector geometry</div><div class="t" style="left:910.7px;top:342.4px;font-size:7.8px;color:#2b2b2b;">Vector overlay</div><div class="t" style="left:910.7px;top:352.28999999999996px;font-size:7.8px;color:#2b2b2b;">Vector selection</div><div class="t" style="left:910.7px;top:362.18px;font-size:7.8px;color:#2b2b2b;">Vector table</div><div class="t" style="left:910.7px;top:372.07000000000005px;font-size:7.8px;color:#2b2b2b;">Vector tiles</div><div class="t" style="left:910.7px;top:381.96000000000004px;font-size:7.8px;color:#2b2b2b;">GDAL</div><div class="t" style="left:910.7px;top:391.85px;font-size:7.8px;color:#2b2b2b;">GRASS</div><div class="t" style="left:910.7px;top:401.74px;font-size:7.8px;color:#2b2b2b;">Rangeland Tools</div><div class="t" style="left:910.7px;top:411.63px;font-size:7.8px;color:#2b2b2b;">Scripts</div><svg class="a" style="left:0;top:0" width="1000" height="558" viewBox="0 0 1000 558"><rect x="146" y="105" width="6.2" height="6.2" rx="1.2" fill="#d9d9d9" stroke="#a8a8a8" stroke-width="0.6"/><rect x="147.8" y="106.8" width="2.6" height="2.6" fill="none" stroke="#777" stroke-width="0.5"/><rect x="153" y="105" width="6.2" height="6.2" rx="1.2" fill="#d9d9d9" stroke="#a8a8a8" stroke-width="0.6"/><path d="M154.9,106.9 l2.4,2.4 M157.3,106.9 l-2.4,2.4" stroke="#444" stroke-width="0.8"/><rect x="146" y="378.5" width="6.2" height="6.2" rx="1.2" fill="#d9d9d9" stroke="#a8a8a8" stroke-width="0.6"/><rect x="147.8" y="380.3" width="2.6" height="2.6" fill="none" stroke="#777" stroke-width="0.5"/><rect x="153" y="378.5" width="6.2" height="6.2" rx="1.2" fill="#d9d9d9" stroke="#a8a8a8" stroke-width="0.6"/><path d="M154.9,380.4 l2.4,2.4 M157.3,380.4 l-2.4,2.4" stroke="#444" stroke-width="0.8"/><rect x="986.5" y="105" width="6.2" height="6.2" rx="1.2" fill="#d9d9d9" stroke="#a8a8a8" stroke-width="0.6"/><rect x="988.3" y="106.8" width="2.6" height="2.6" fill="none" stroke="#777" stroke-width="0.5"/><rect x="993.5" y="105" width="6.2" height="6.2" rx="1.2" fill="#d9d9d9" stroke="#a8a8a8" stroke-width="0.6"/><path d="M995.4,106.9 l2.4,2.4 M997.8,106.9 l-2.4,2.4" stroke="#444" stroke-width="0.8"/><g transform="translate(39.60,116.10) scale(0.7)"><path d="M2,12 L5,8 L7,10 z" fill="#e04a2a"/><path d="M5,9 L12,2" stroke="#e9b93a" stroke-width="2"/><circle cx="4" cy="10" r="2" fill="#f07a2a"/></g><g transform="translate(53.10,116.10) scale(0.7)"><path d="M3,2 h5 v9 h-5 z" fill="#e8e8e8" stroke="#aaa" stroke-width="0.7"/><circle cx="9" cy="10" r="2.5" fill="#9ccf9c"/></g><g transform="translate(66.10,116.10) scale(0.7)"><ellipse cx="6.5" cy="7" rx="5.5" ry="3.5" fill="#cfd8e6"/><circle cx="6.5" cy="7" r="2.2" fill="#3a6fb0"/><path d="M10,11 h3 l-1.5,1.5 z" fill="#333"/></g><g transform="translate(79.10,116.10) scale(0.7)"><path d="M1,2 H13 L8.5,7 V12 L5.5,13 V7 z" fill="#4f86c9" stroke="#3a6aa8" stroke-width="0.5"/><rect x="1" y="1.5" width="12" height="2" fill="#f0d04a"/><path d="M10,11 h3 l-1.5,1.5 z" fill="#333"/></g><g transform="translate(92.10,116.10) scale(0.7)"><text x="1" y="9" font-size="9" fill="#8a5aa8" font-family="Liberation Serif" font-style="italic">ε</text><rect x="6" y="7" width="5" height="5" fill="none" stroke="#888" stroke-width="0.7"/></g><path d="M104.5,120.3 h4 l-2,2.2 z" fill="#444"/><g transform="translate(111.60,116.10) scale(0.7)"><path d="M7,1 v8 M4,6 l3,3 l3,-3" stroke="#3a6fb0" stroke-width="1.6" fill="none"/><rect x="2" y="9" width="10" height="3.5" fill="#f0a040"/><rect x="1" y="1" width="3" height="10" fill="#e07040"/></g><g transform="translate(124.50,116.10) scale(0.7)"><path d="M8,13 v-9 M5,7 l3,-4 l3,4" stroke="#3a6fb0" stroke-width="1.8" fill="none"/><rect x="1" y="4" width="5" height="9" fill="#f0c040" stroke="#c08a2a" stroke-width="0.5"/></g><g transform="translate(137.10,116.10) scale(0.7)"><rect x="1.5" y="1.5" width="9" height="9" fill="#fff" stroke="#888" stroke-width="0.8"/><rect x="8" y="9" width="5" height="3.5" rx="1" fill="#e04a3a"/></g><g transform="translate(39.80,389.10) scale(0.7)"><rect x="1.5" y="1.5" width="9" height="9" fill="#fff" stroke="#888" stroke-width="0.8"/><circle cx="10.5" cy="10.5" r="2.5" fill="#4aaa4a"/></g><g transform="translate(53.10,389.10) scale(0.7)"><path d="M2.5,6 A4.8,4.8 0 0 1 11,4" stroke="#3c8ad8" stroke-width="2.3" fill="none"/><path d="M11.5,8 A4.8,4.8 0 0 1 3,10" stroke="#3c8ad8" stroke-width="2.3" fill="none"/><path d="M9,1.5 l3.5,0.5 l-1,3.5z M5,12.5 l-3.5,-0.5 l1,-3.5z" fill="#3c8ad8"/></g><g transform="translate(65.70,389.10) scale(0.7)"><path d="M1,2 H13 L8.5,7 V12 L5.5,13 V7 z" fill="#4f86c9"/><rect x="1" y="1.5" width="12" height="2" fill="#f0d04a"/></g><g transform="translate(79.10,389.10) scale(0.7)"><path d="M8,13 v-9 M5,7 l3,-4 l3,4" stroke="#3a6fb0" stroke-width="1.8" fill="none"/><rect x="1" y="4" width="5" height="9" fill="#f0c040"/></g><g transform="translate(91.60,389.10) scale(0.7)"><circle cx="7" cy="7" r="6" fill="#3a7fc8"/><rect x="6.2" y="5.8" width="1.7" height="4.8" fill="#fff"/><circle cx="7" cy="3.8" r="0.9" fill="#fff"/></g><g transform="translate(46.52,403.52) scale(0.64)"><path d="M7,1 L8.8,5 L13,5.3 L9.8,8.2 L10.8,12.5 L7,10.3 L3.2,12.5 L4.2,8.2 L1,5.3 L5.2,5 z" fill="#f5d53a" stroke="#caa52a" stroke-width="0.5"/></g><path d="M40.5,415.88 l2.2,2 l-2.2,2 z" fill="#555"/><g transform="translate(46.52,413.40) scale(0.64)"><rect x="3" y="1" width="8" height="12" fill="#ddd" stroke="#aaa" stroke-width="0.6"/><rect x="7" y="1" width="3" height="5" fill="#4f86c9"/></g><path d="M40.5,425.76 l2.2,2 l-2.2,2 z" fill="#555"/><g transform="translate(46.52,423.28) scale(0.64)"><path d="M1,6 L7,1 L13,6 V13 H1 z" fill="#eee" stroke="#888" stroke-width="0.8"/><circle cx="7" cy="8.5" r="2" fill="none" stroke="#666" stroke-width="0.8"/></g><path d="M40.5,435.64 l2.2,2 l-2.2,2 z" fill="#555"/><g transform="translate(46.52,433.16) scale(0.64)"><path d="M1,3 h5 l1,1.5 h6 v8.5 h-12 z" fill="#f4f4f4" stroke="#888" stroke-width="0.8"/></g><g transform="translate(46.52,443.04) scale(0.64)"><path d="M1,5 L7,2 L13,5 V11 L7,13.5 L1,11 z" fill="#f0d04a" stroke="#b59520" stroke-width="0.6"/><path d="M4,4 L8,2 L11,4 L7,6 z" fill="#4f86c9"/></g><g transform="translate(46.52,452.92) scale(0.64)"><path d="M1,13 C3,7 7,2 13,1 C12,6 8,10 3,11 z" fill="#4f86c9"/></g><g transform="translate(46.52,462.80) scale(0.64)"><path d="M2,2 C1,8 4,11 7,13 C9,11 13,8 12,2 z" fill="#336791"/><circle cx="5" cy="5" r="1" fill="#fff"/></g><g transform="translate(46.52,472.68) scale(0.64)"><path d="M1,2 L13,7 L3,12 L6,7 z" fill="#4f6fa8"/></g><g transform="translate(46.52,482.56) scale(0.64)"><circle cx="7" cy="7" r="6" fill="#6a9ad6"/><path d="M1,7 h12 M7,1 v12" stroke="#d8e6f5" stroke-width="0.8"/></g><g transform="translate(46.52,492.44) scale(0.64)"><path d="M2,11 a3,3 0 0 1 1,-5.5 a4,4 0 0 1 7.5,0 a3,3 0 0 1 1,5.5 z" fill="#fff" stroke="#5b8ed0" stroke-width="1"/></g><g transform="translate(46.52,502.32) scale(0.64)"><path d="M7,1 L12,4 V10 L7,13 L2,10 V4 z" fill="#a8c8ee" stroke="#5b8ed0" stroke-width="0.8"/></g><g transform="translate(46.52,512.20) scale(0.64)"><circle cx="7" cy="7" r="2" fill="#5b7ea8"/><path d="M3.5,3.5 a5,5 0 0 0 0,7 M10.5,3.5 a5,5 0 0 1 0,7" stroke="#5b7ea8" stroke-width="1" fill="none"/></g><g transform="translate(46.52,522.08) scale(0.64)"><rect x="1.5" y="1.5" width="11" height="11" fill="#5a6f8a"/><path d="M1.5,5 h11 M1.5,8.5 h11 M5,1.5 v11 M8.5,1.5 v11" stroke="#d8e0ea" stroke-width="0.7"/></g><path d="M154.2,408 l2,-2.2 l2,2.2 z" fill="#333"/><path d="M154.2,530.5 l2,2.2 l2,-2.2 z" fill="#333"/><path d="M41.5,539.5 l-2,-0.1 M42,537.5 l-2.2,2 l2.2,2 z" fill="#333"/><path d="M148,537.5 l2.2,2 l-2.2,2 z" fill="#333"/><g transform="translate(889.10,116.10) scale(0.7)"><circle cx="4" cy="4" r="3" fill="#d43a3a"/><circle cx="9" cy="8" r="3" fill="#999"/><circle cx="4" cy="9.5" r="2" fill="#4f86c9"/><path d="M10,11.5 h3 l-1.5,1.5 z" fill="#333"/></g><g transform="translate(902.60,116.10) scale(0.7)"><rect x="2.5" y="1" width="6" height="6" rx="2" fill="#3d78b8"/><rect x="1" y="5" width="6" height="4" rx="1.5" fill="#3d78b8"/><rect x="5.5" y="6.5" width="6" height="6" rx="2" fill="#f0cf3a"/><rect x="7" y="5" width="6" height="4" rx="1.5" fill="#f0cf3a"/><path d="M10,11.5 h3 l-1.5,1.5 z" fill="#333"/></g><g transform="translate(915.60,116.10) scale(0.7)"><circle cx="7" cy="7" r="5.5" fill="#fff" stroke="#999" stroke-width="0.9"/><path d="M7,3.5 V7 L9.5,8.5" stroke="#999" fill="none" stroke-width="0.9"/></g><g transform="translate(928.10,116.10) scale(0.7)"><path d="M3,1 h5 l3,3 v9 h-8 z" fill="#f2f2f2" stroke="#cfcfcf" stroke-width="0.8"/></g><path d="M943,116 V126" stroke="#d8d8d8" stroke-width="0.6" stroke-dasharray="1,1"/><g transform="translate(947.60,116.10) scale(0.7)"><path d="M1,2 h10 v7 h-5 l-3,3 v-3 h-2 z" fill="#f0d04a" stroke="#c9a52a" stroke-width="0.6"/></g><path d="M959,116 V126" stroke="#d8d8d8" stroke-width="0.6" stroke-dasharray="1,1"/><g transform="translate(962.10,116.10) scale(0.7)"><path d="M2,2 L12,12" stroke="#e0b030" stroke-width="2.2"/><path d="M2,2 L6,6" stroke="#777" stroke-width="2"/></g><circle cx="893.8" cy="135.3" r="2.4" fill="none" stroke="#888" stroke-width="0.8"/><path d="M895.5,137 L897.5,139" stroke="#888" stroke-width="0.9"/><path d="M891.8,146.0 l2.2,2 l-2.2,2 z" fill="#555"/><circle cx="903.2" cy="148.0" r="3.6" fill="#fff" stroke="#999" stroke-width="0.7"/><path d="M903.2,145.8 V148.0 L904.8000000000001,149.0" stroke="#999" stroke-width="0.6" fill="none"/><path d="M891.8,155.89 l2.2,2 l-2.2,2 z" fill="#555"/><circle cx="903.2" cy="157.69" r="3" fill="none" stroke="#72b043" stroke-width="1.5"/><path d="M903.2,157.89 L906.6,161.48999999999998" stroke="#72b043" stroke-width="1.3"/><circle cx="903.5" cy="157.89" r="0.9" fill="#f0a020"/><path d="M891.8,165.78 l2.2,2 l-2.2,2 z" fill="#555"/><circle cx="903.2" cy="167.58" r="3" fill="none" stroke="#72b043" stroke-width="1.5"/><path d="M903.2,167.78 L906.6,171.38" stroke="#72b043" stroke-width="1.3"/><circle cx="903.5" cy="167.78" r="0.9" fill="#f0a020"/><path d="M891.8,175.67000000000002 l2.2,2 l-2.2,2 z" fill="#555"/><circle cx="903.2" cy="177.47000000000003" r="3" fill="none" stroke="#72b043" stroke-width="1.5"/><path d="M903.2,177.67000000000002 L906.6,181.27" stroke="#72b043" stroke-width="1.3"/><circle cx="903.5" cy="177.67000000000002" r="0.9" fill="#f0a020"/><path d="M891.8,185.56 l2.2,2 l-2.2,2 z" fill="#555"/><circle cx="903.2" cy="187.36" r="3" fill="none" stroke="#72b043" stroke-width="1.5"/><path d="M903.2,187.56 L906.6,191.16" stroke="#72b043" stroke-width="1.3"/><circle cx="903.5" cy="187.56" r="0.9" fill="#f0a020"/><path d="M891.8,195.45 l2.2,2 l-2.2,2 z" fill="#555"/><circle cx="903.2" cy="197.25" r="3" fill="none" stroke="#72b043" stroke-width="1.5"/><path d="M903.2,197.45 L906.6,201.04999999999998" stroke="#72b043" stroke-width="1.3"/><circle cx="903.5" cy="197.45" r="0.9" fill="#f0a020"/><path d="M891.8,205.34 l2.2,2 l-2.2,2 z" fill="#555"/><circle cx="903.2" cy="207.14000000000001" r="3" fill="none" stroke="#72b043" stroke-width="1.5"/><path d="M903.2,207.34 L906.6,210.94" stroke="#72b043" stroke-width="1.3"/><circle cx="903.5" cy="207.34" r="0.9" fill="#f0a020"/><path d="M891.8,215.23000000000002 l2.2,2 l-2.2,2 z" fill="#555"/><circle cx="903.2" cy="217.03000000000003" r="3" fill="none" stroke="#72b043" stroke-width="1.5"/><path d="M903.2,217.23000000000002 L906.6,220.83" stroke="#72b043" stroke-width="1.3"/><circle cx="903.5" cy="217.23000000000002" r="0.9" fill="#f0a020"/><path d="M891.8,225.12 l2.2,2 l-2.2,2 z" fill="#555"/><circle cx="903.2" cy="226.92000000000002" r="3" fill="none" stroke="#72b043" stroke-width="1.5"/><path d="M903.2,227.12 L906.6,230.72" stroke="#72b043" stroke-width="1.3"/><circle cx="903.5" cy="227.12" r="0.9" fill="#f0a020"/><path d="M891.8,235.01 l2.2,2 l-2.2,2 z" fill="#555"/><circle cx="903.2" cy="236.81" r="3" fill="none" stroke="#72b043" stroke-width="1.5"/><path d="M903.2,237.01 L906.6,240.60999999999999" stroke="#72b043" stroke-width="1.3"/><circle cx="903.5" cy="237.01" r="0.9" fill="#f0a020"/><path d="M891.8,244.9 l2.2,2 l-2.2,2 z" fill="#555"/><circle cx="903.2" cy="246.70000000000002" r="3" fill="none" stroke="#72b043" stroke-width="1.5"/><path d="M903.2,246.9 L906.6,250.5" stroke="#72b043" stroke-width="1.3"/><circle cx="903.5" cy="246.9" r="0.9" fill="#f0a020"/><path d="M891.8,254.79000000000002 l2.2,2 l-2.2,2 z" fill="#555"/><circle cx="903.2" cy="256.59000000000003" r="3" fill="none" stroke="#72b043" stroke-width="1.5"/><path d="M903.2,256.79 L906.6,260.39000000000004" stroke="#72b043" stroke-width="1.3"/><circle cx="903.5" cy="256.79" r="0.9" fill="#f0a020"/><path d="M891.8,264.68 l2.2,2 l-2.2,2 z" fill="#555"/><circle cx="903.2" cy="266.48" r="3" fill="none" stroke="#72b043" stroke-width="1.5"/><path d="M903.2,266.68 L906.6,270.28000000000003" stroke="#72b043" stroke-width="1.3"/><circle cx="903.5" cy="266.68" r="0.9" fill="#f0a020"/><path d="M891.8,274.57 l2.2,2 l-2.2,2 z" fill="#555"/><circle cx="903.2" cy="276.37" r="3" fill="none" stroke="#72b043" stroke-width="1.5"/><path d="M903.2,276.57 L906.6,280.17" stroke="#72b043" stroke-width="1.3"/><circle cx="903.5" cy="276.57" r="0.9" fill="#f0a020"/><path d="M891.8,284.46000000000004 l2.2,2 l-2.2,2 z" fill="#555"/><circle cx="903.2" cy="286.26000000000005" r="3" fill="none" stroke="#72b043" stroke-width="1.5"/><path d="M903.2,286.46000000000004 L906.6,290.06000000000006" stroke="#72b043" stroke-width="1.3"/><circle cx="903.5" cy="286.46000000000004" r="0.9" fill="#f0a020"/><path d="M891.8,294.35 l2.2,2 l-2.2,2 z" fill="#555"/><circle cx="903.2" cy="296.15000000000003" r="3" fill="none" stroke="#72b043" stroke-width="1.5"/><path d="M903.2,296.35 L906.6,299.95000000000005" stroke="#72b043" stroke-width="1.3"/><circle cx="903.5" cy="296.35" r="0.9" fill="#f0a020"/><path d="M891.8,304.24 l2.2,2 l-2.2,2 z" fill="#555"/><circle cx="903.2" cy="306.04" r="3" fill="none" stroke="#72b043" stroke-width="1.5"/><path d="M903.2,306.24 L906.6,309.84000000000003" stroke="#72b043" stroke-width="1.3"/><circle cx="903.5" cy="306.24" r="0.9" fill="#f0a020"/><path d="M891.8,314.13 l2.2,2 l-2.2,2 z" fill="#555"/><circle cx="903.2" cy="315.93" r="3" fill="none" stroke="#72b043" stroke-width="1.5"/><path d="M903.2,316.13 L906.6,319.73" stroke="#72b043" stroke-width="1.3"/><circle cx="903.5" cy="316.13" r="0.9" fill="#f0a020"/><path d="M891.8,324.02 l2.2,2 l-2.2,2 z" fill="#555"/><circle cx="903.2" cy="325.82" r="3" fill="none" stroke="#72b043" stroke-width="1.5"/><path d="M903.2,326.02 L906.6,329.62" stroke="#72b043" stroke-width="1.3"/><circle cx="903.5" cy="326.02" r="0.9" fill="#f0a020"/><path d="M891.8,333.91 l2.2,2 l-2.2,2 z" fill="#555"/><circle cx="903.2" cy="335.71000000000004" r="3" fill="none" stroke="#72b043" stroke-width="1.5"/><path d="M903.2,335.91 L906.6,339.51000000000005" stroke="#72b043" stroke-width="1.3"/><circle cx="903.5" cy="335.91" r="0.9" fill="#f0a020"/><path d="M891.8,343.8 l2.2,2 l-2.2,2 z" fill="#555"/><circle cx="903.2" cy="345.6" r="3" fill="none" stroke="#72b043" stroke-width="1.5"/><path d="M903.2,345.8 L906.6,349.40000000000003" stroke="#72b043" stroke-width="1.3"/><circle cx="903.5" cy="345.8" r="0.9" fill="#f0a020"/><path d="M891.8,353.69 l2.2,2 l-2.2,2 z" fill="#555"/><circle cx="903.2" cy="355.49" r="3" fill="none" stroke="#72b043" stroke-width="1.5"/><path d="M903.2,355.69 L906.6,359.29" stroke="#72b043" stroke-width="1.3"/><circle cx="903.5" cy="355.69" r="0.9" fill="#f0a020"/><path d="M891.8,363.58000000000004 l2.2,2 l-2.2,2 z" fill="#555"/><circle cx="903.2" cy="365.38000000000005" r="3" fill="none" stroke="#72b043" stroke-width="1.5"/><path d="M903.2,365.58000000000004 L906.6,369.18000000000006" stroke="#72b043" stroke-width="1.3"/><circle cx="903.5" cy="365.58000000000004" r="0.9" fill="#f0a020"/><path d="M891.8,373.47 l2.2,2 l-2.2,2 z" fill="#555"/><circle cx="903.2" cy="375.27000000000004" r="3" fill="none" stroke="#72b043" stroke-width="1.5"/><path d="M903.2,375.47 L906.6,379.07000000000005" stroke="#72b043" stroke-width="1.3"/><circle cx="903.5" cy="375.47" r="0.9" fill="#f0a020"/><path d="M891.8,383.36 l2.2,2 l-2.2,2 z" fill="#555"/><rect x="899.4000000000001" y="381.56" width="7.6" height="7.6" fill="#2a6a9a"/><path d="M899.4000000000001,387.36 l3,-4 l2,2 l2.6,-3 v5 z" fill="#aee0f0"/><path d="M891.8,393.25 l2.2,2 l-2.2,2 z" fill="#555"/><circle cx="903.2" cy="394.25" r="2.8" fill="#e8f0e0" stroke="#9ab08a" stroke-width="0.6"/><path d="M902.2,398.75 l1,-4 l1,4" stroke="#5aa02c" stroke-width="0.8" fill="none"/><path d="M891.8,403.14 l2.2,2 l-2.2,2 z" fill="#555"/><circle cx="903.2" cy="405.14" r="3.8" fill="#e8702a"/><circle cx="903.2" cy="405.14" r="1.5" fill="#fff0c0"/><path d="M891.8,413.03000000000003 l2.2,2 l-2.2,2 z" fill="#555"/><rect x="899.7" y="411.23" width="4" height="4" rx="1" fill="#3d78b8"/><rect x="902.7" y="414.83000000000004" width="4" height="4" rx="1" fill="#f0cf3a"/></svg>
<div class="a" style="left:163px;top:104px;width:720px;height:439px;background:#fff"></div>
<svg class="a" style="left:0;top:0" width="1000" height="558" viewBox="0 0 1000 558">
<g fill="#8c5a9b" stroke="#33253a" stroke-width="0.75" stroke-linejoin="round">
<polygon points="474.3,270.2 474.7,268.3 474.9,266.2 475.8,264.4 475.8,262.5 475.3,260.6 475.0,258.7 475.8,256.9 476.3,255.0 476.5,253.0 477.9,252.3 479.2,251.5 480.2,250.2 481.5,249.4 483.1,248.9 484.4,248.0 485.9,247.4 487.1,246.3 488.7,245.8 490.2,245.3 491.4,244.2 493.1,244.3 494.3,243.1 495.9,242.8 497.4,242.4 498.7,241.5 500.5,241.5 502.2,241.2 503.8,240.5 505.5,239.9 507.3,240.0 509.1,240.1 510.6,239.2 512.4,239.3 514.0,238.6 515.6,238.3 517.3,238.0 519.1,237.5 520.9,237.0 522.8,236.7 524.5,236.0 526.0,235.2 527.2,233.9 528.8,233.3 530.1,232.1 531.7,231.5 533.2,230.6 534.0,229.0 535.5,228.0 536.0,226.3 536.8,224.7 537.4,223.0 537.8,221.5 538.8,220.3 539.2,218.8 539.4,217.3 540.0,215.9 540.6,214.5 542.2,213.6 543.5,212.4 545.0,211.3 546.7,211.8 548.6,211.9 550.3,212.4 550.8,210.9 551.3,209.4 552.0,207.9 551.9,206.3 552.5,204.8 553.8,203.9 554.5,202.5 555.6,201.5 556.7,200.4 558.2,199.7 559.0,198.4 560.4,197.3 562.0,196.7 563.6,196.1 565.2,195.5 566.7,194.7 568.0,193.5 569.7,193.0 571.2,193.8 572.5,195.0 574.2,195.4 575.6,196.3 576.7,197.7 578.3,198.4 580.2,198.7 581.8,199.6 583.4,200.4 585.0,201.4 586.4,200.8 587.5,199.6 588.8,198.9 589.5,197.4 590.3,195.9 591.3,194.5 591.4,192.6 592.5,191.3 592.9,189.6 593.7,188.2 594.5,186.7 595.0,185.1 594.4,183.6 594.3,182.0 594.2,180.4 593.8,178.8 595.2,178.0 596.7,177.8 598.1,177.2 599.8,177.5 601.0,176.3 602.6,176.3 604.3,175.4 606.3,175.0 607.8,174.9 609.3,174.3 610.9,174.3 612.4,173.9 613.9,173.8 613.9,175.6 614.6,177.1 615.1,178.8 616.6,179.2 618.2,179.5 619.6,180.3 621.0,181.0 622.6,181.3 624.1,181.5 625.6,181.5 627.2,181.3 628.7,181.7 630.2,181.3 631.4,180.4 632.7,179.7 634.2,179.1 635.3,178.2 636.4,177.1 637.7,176.3 639.1,175.7 640.4,174.8 641.5,173.8 641.4,175.4 640.9,176.9 640.3,178.4 640.2,180.0 641.5,181.2 642.7,182.5 642.1,184.1 641.2,185.5 640.8,187.2 639.9,188.7 639.0,190.1 639.6,191.6 641.0,192.5 641.6,194.0 642.7,195.1 640.2,196.3 638.7,195.7 637.6,194.6 636.5,193.5 635.2,192.6 634.4,194.3 633.0,195.5 632.0,197.1 631.4,198.9 632.0,200.5 632.6,202.2 632.7,203.9 634.0,204.9 635.5,205.4 637.1,205.8 638.7,206.0 640.2,206.6 641.5,207.6 642.6,208.6 643.9,209.5 645.2,210.3 646.6,211.1 647.8,211.9 649.0,212.9 650.2,213.9 651.7,214.4 653.1,215.1 654.6,215.5 656.0,215.9 657.5,216.4 658.8,217.3 660.3,217.7 661.7,218.7 663.6,218.7 664.9,219.8 666.6,220.2 667.9,219.3 668.9,218.0 670.1,216.9 671.7,216.4 672.8,215.2 672.9,213.4 673.3,211.8 673.7,210.1 674.7,208.5 674.8,206.8 675.3,205.1 675.0,203.4 675.4,201.8 675.7,200.2 675.8,198.6 675.6,196.9 676.4,195.3 676.4,193.7 676.1,192.0 676.3,190.4 676.6,188.8 676.7,187.2 676.8,185.5 677.6,184.0 677.6,182.4 678.2,180.8 678.7,179.3 678.5,177.6 679.0,176.0 679.2,174.3 679.7,172.7 680.2,171.0 680.6,169.4 681.8,170.8 682.3,172.6 683.3,173.9 684.3,175.2 685.4,176.4 685.9,178.1 686.9,179.4 688.0,180.6 688.4,182.1 689.1,183.5 688.9,185.1 689.6,186.5 689.5,188.0 690.1,189.5 690.8,190.9 690.7,192.4 691.2,193.9 691.8,195.3 692.0,196.8 693.5,197.6 695.2,197.7 696.8,198.4 697.9,199.5 698.8,200.8 699.2,202.4 700.3,203.5 701.2,204.7 702.1,206.0 702.6,207.5 703.1,209.1 704.3,210.5 704.6,212.2 705.3,213.7 706.4,215.1 706.6,216.7 707.6,218.0 707.5,219.7 708.3,221.1 708.9,222.6 709.4,224.2 710.1,225.8 711.3,227.0 712.0,228.5 712.7,230.1 713.8,231.2 715.3,231.6 716.7,232.3 717.9,233.1 718.9,234.3 720.2,235.1 721.8,235.7 723.0,237.0 724.9,237.0 726.2,238.1 727.7,238.9 728.6,240.3 729.7,241.5 730.5,242.9 731.7,244.0 732.8,245.2 733.0,246.8 733.4,248.3 734.0,249.8 734.7,251.2 735.3,252.7 736.4,253.9 737.3,255.2 738.6,256.3 739.6,257.6 740.5,259.0 741.5,260.2 742.5,261.4 743.5,262.5 744.6,263.6 745.3,265.0 746.3,266.4 747.9,267.0 749.1,268.1 750.4,269.1 751.5,270.3 752.8,271.3 754.3,272.2 755.8,272.9 757.5,273.3 759.1,273.8 758.4,275.3 758.6,277.0 758.1,278.5 757.8,280.1 758.4,281.7 758.3,283.5 759.4,285.0 759.8,286.7 759.7,288.5 760.4,290.1 760.9,291.8 761.3,293.6 761.2,295.4 761.4,297.1 761.6,298.9 761.2,300.6 761.0,302.3 760.5,303.9 760.1,305.6 759.8,307.3 759.1,308.9 758.8,310.7 758.8,312.5 758.6,314.2 757.7,315.9 757.8,317.7 757.0,319.1 756.9,320.7 756.3,322.2 756.1,323.8 755.3,325.2 754.6,326.7 753.3,327.7 752.0,328.7 751.6,330.5 750.3,331.5 749.4,332.7 748.1,333.8 747.7,335.4 746.3,336.3 745.4,337.6 744.8,339.2 743.7,340.5 742.9,342.0 742.1,343.4 741.6,345.1 740.4,346.5 740.0,348.4 738.6,349.8 737.8,351.4 737.4,353.1 737.3,354.9 737.1,356.6 736.5,358.3 736.2,360.0 735.8,362.0 735.2,364.0 733.5,364.9 731.6,365.3 730.0,366.5 728.7,367.3 727.0,367.4 725.8,368.6 724.3,368.9 722.5,369.5 720.9,370.4 719.2,371.2 717.4,371.8 715.8,372.2 714.4,372.9 712.8,373.2 711.2,373.5 709.6,373.8 707.8,373.4 706.4,372.1 704.7,371.5 703.0,371.0 701.4,369.9 699.7,369.0 697.8,369.8 696.0,371.0 694.0,371.9 691.8,372.3 689.7,372.3 687.7,371.4 686.1,371.3 684.9,370.2 683.3,370.2 681.9,369.3 680.3,369.5 678.9,368.9 677.4,368.4 676.0,367.5 674.6,366.8 673.0,366.5 671.6,365.8 670.1,365.2 668.8,364.4 667.5,363.5 666.6,362.1 665.1,361.4 665.1,359.5 664.2,357.7 663.9,355.9 662.8,354.8 662.5,353.2 661.4,352.1 660.1,351.3 659.0,350.2 657.6,349.6 656.1,349.0 654.5,348.7 653.2,347.7 653.7,346.2 653.8,344.6 652.9,342.8 652.6,340.8 650.7,340.2 649.5,342.7 647.9,343.7 646.9,345.2 645.5,346.4 643.8,347.1 642.6,345.8 643.7,343.9 645.1,342.1 645.8,340.4 647.0,339.0 648.2,337.7 649.0,336.3 649.1,334.6 650.1,333.3 649.5,330.5 647.0,332.0 646.3,333.8 645.1,335.2 644.1,336.5 642.8,337.6 641.3,338.3 640.0,339.6 638.9,341.0 637.5,342.1 636.4,343.2 635.7,344.6 633.8,343.3 632.7,341.9 631.3,340.8 630.4,338.9 629.4,337.0 628.8,335.0 627.5,333.3 625.0,332.3 623.8,330.8 622.1,330.0 620.5,329.4 619.2,328.2 617.6,327.5 615.9,327.1 614.5,326.1 613.2,325.3 611.5,325.3 610.3,324.2 608.9,323.4 607.4,323.0 606.0,322.4 604.6,321.9 603.1,321.4 601.5,321.5 599.8,321.8 598.2,321.5 596.6,321.6 595.0,321.1 593.3,321.1 591.7,321.4 590.0,321.3 588.5,322.1 586.8,321.9 585.1,322.1 583.6,323.2 581.9,323.0 580.3,323.3 578.8,323.9 577.3,324.2 575.7,324.2 574.1,324.2 572.7,325.0 571.1,325.1 569.6,325.3 568.1,325.5 566.6,326.2 565.0,326.1 563.7,327.0 562.3,327.7 560.8,328.0 559.2,328.1 558.0,329.4 556.4,329.5 555.1,330.2 553.7,330.9 552.5,331.9 551.5,333.1 551.1,334.7 549.8,335.6 548.4,336.2 546.9,336.3 545.5,336.9 544.1,337.5 542.4,337.3 540.9,338.2 539.2,337.6 537.6,338.2 535.9,338.0 534.3,338.3 532.7,338.5 531.1,338.8 529.5,338.8 528.0,339.4 526.3,338.7 524.8,338.9 523.2,339.4 521.7,339.8 520.2,340.3 518.7,340.8 517.3,341.6 515.9,342.3 514.3,342.5 512.7,342.7 511.3,343.4 509.9,344.2 508.3,344.1 506.7,344.8 505.0,344.8 503.4,344.9 501.8,344.8 500.1,344.6 498.5,345.1 497.0,344.4 495.5,343.9 493.9,343.5 492.3,343.1 490.9,342.3 489.2,341.5 488.0,340.0 486.2,339.4 486.1,337.4 485.2,335.6 486.1,334.1 486.9,332.6 487.3,330.9 487.9,329.3 489.0,328.0 488.4,326.4 488.3,324.8 488.3,323.1 488.9,321.4 488.4,319.9 487.9,318.3 488.0,316.6 487.2,315.1 486.6,313.6 486.2,312.0 485.8,310.4 485.5,308.7 485.2,307.1 484.2,305.8 483.5,304.4 483.0,302.8 481.9,301.6 481.4,300.0 480.6,298.4 480.7,296.6 480.0,295.0 480.3,293.4 481.1,292.0 481.3,290.4 482.0,289.0 481.3,287.4 479.9,286.2 479.3,284.6 478.6,283.0 478.2,281.4 477.0,280.2 476.6,278.7 475.8,277.3 475.2,275.6 474.7,273.8 474.6,272.0 474.3,270.2"/>
<polygon points="698.2,384.6 699.7,387.6 705.6,388.6 712.5,389.6 719.4,387.6 722.3,386.6 724.3,389.6 723.3,397.4 721.4,403.3 717.4,405.3 709.6,407.2 703.6,401.4 701.7,394.5 698.2,388.6"/><ellipse cx="692.8" cy="379.6" rx="1" ry="1.6"/><polygon points="721.4,380 723.5,379.6 724.3,383 723,384.6 721.8,383"/>
<polygon points="640,350.8 643.8,349.6 650.1,350.2 648.8,352.1 643.2,352.7 640.7,352.1"/>
</g>
<defs><clipPath id="auclip"><polygon points="474.3,270.2 475.8,264.4 475,258.7 476.5,253 481.5,249.4 488.7,245.8 498.7,241.5 507.3,240 517.3,238 524.5,236 531.7,231.5 535.5,228 537.4,223 540.6,214.5 545,211.3 550.3,212.4 552.5,204.8 559,198.4 569.7,193 578.3,198.4 585,201.4 588.8,198.9 592.5,191.3 595,185.1 593.8,178.8 602.6,176.3 606.3,175 613.9,173.8 615.1,178.8 622.6,181.3 630.2,181.3 637.7,176.3 641.5,173.8 640.2,180 642.7,182.5 639,190.1 642.7,195.1 640.2,196.3 635.2,192.6 631.4,198.9 632.7,203.9 641.5,207.6 650.2,213.9 660.3,217.7 666.6,220.2 672.8,215.2 675.3,205.1 676.6,188.8 679,176 680.6,169.4 682.3,172.6 688,180.6 692,196.8 696.8,198.4 702.6,207.5 706.4,215.1 708.9,222.6 712.7,230.1 720.2,235.1 727.7,238.9 732.8,245.2 735.3,252.7 741.5,260.2 745.3,265 752.8,271.3 759.1,273.8 757.8,280.1 760.4,290.1 761.6,298.9 759.1,308.9 757.8,317.7 755.3,325.2 750.3,331.5 745.4,337.6 741.6,345.1 737.8,351.4 736.2,360 735.2,364 730,366.5 724.3,368.9 717.4,371.8 709.6,373.8 703,371 699.7,369 696,371 691.8,372.3 687.7,371.4 678.9,368.9 670.1,365.2 665.1,361.4 663.9,355.9 661.4,352.1 657.6,349.6 653.2,347.7 653.8,344.6 652.6,340.8 650.7,340.2 649.5,342.7 646.9,345.2 643.8,347.1 642.6,345.8 645.1,342.1 648.2,337.7 650.1,333.3 649.5,330.5 647,332 645.1,335.2 641.3,338.3 637.5,342.1 635.7,344.6 633.8,343.3 631.3,340.8 629.4,337 627.5,333.3 625,332.3 622.1,330 614.5,326.1 603.1,321.4 591.7,321.4 580.3,323.3 565,326.1 553.7,330.9 549.8,335.6 544.1,337.5 532.7,338.5 523.2,339.4 509.9,344.2 498.5,345.1 490.9,342.3 486.2,339.4 485.2,335.6 489,328 488,316.6 485.2,307.1 481.4,300 480,295 482,289 478.6,283 475.8,277.3"/><polygon points="698.2,384.6 699.7,387.6 705.6,388.6 712.5,389.6 719.4,387.6 722.3,386.6 724.3,389.6 723.3,397.4 721.4,403.3 717.4,405.3 709.6,407.2 703.6,401.4 701.7,394.5 698.2,388.6"/></clipPath></defs>
<g fill="none" stroke="#33253a" stroke-width="0.85" stroke-linejoin="round" clip-path="url(#auclip)">
<polyline points="517.7,238.8 518.9,238.8 519.9,239.7 521.1,239.9 522.1,240.6 523.2,241.0 524.6,240.7 525.7,241.0 526.4,242.6 527.7,242.5 528.5,243.4 529.1,244.4 528.5,245.9 529.7,246.6 530.2,247.6 530.0,248.9 530.8,250.1 530.8,251.4 531.8,252.5 531.5,253.8 530.9,254.8 530.2,255.7 530.2,256.9 529.5,257.9 529.2,259.0 529.0,260.1 528.4,261.3 526.9,261.0 526.1,261.9 525.2,262.6 524.6,263.6 524.0,264.8 522.3,264.7 521.9,266.0 520.8,266.5 520.2,267.6 519.9,269.0 520.4,270.2 520.3,271.5 521.3,272.6 521.4,273.9 522.3,274.7 523.5,274.7 524.3,275.8 525.4,276.1 526.9,275.4 527.7,276.4 528.4,275.2 529.4,274.6 531.1,274.7 531.6,273.4 532.7,272.7 533.7,273.2 535.0,273.0 536.0,273.6 537.1,273.8 538.3,274.0 539.3,274.7 540.4,275.0 541.5,275.2 541.5,276.5 542.3,277.3 542.4,278.5 543.0,279.4 544.0,280.2 544.3,281.6 545.5,282.0 546.5,282.7 546.2,284.0 544.6,284.4 543.7,285.3 543.1,286.3 542.8,287.7 542.2,288.7 541.4,289.7 541.6,291.1 540.2,291.8 540.0,293.0 539.8,294.3 539.0,295.2 539.7,296.4 538.5,297.6 538.3,298.8 539.0,300.0"/>
<polyline points="486.3,250.1 486.9,251.3 485.8,252.6 486.4,253.9 486.8,255.1 486.6,256.4 486.3,257.6 487.3,258.2 488.4,258.5 489.7,257.4 490.7,258.4 491.9,257.7 492.9,258.9 494.0,258.5 495.1,258.9 496.0,259.8 497.1,260.4 498.4,260.1 499.3,261.2 500.8,260.7 502.0,260.8 502.8,261.9 504.2,261.5 505.1,262.6 506.2,262.2 507.3,262.6 508.4,263.0 509.5,262.4 510.6,262.3 511.7,263.6 512.8,262.8 513.9,263.2 515.1,263.8 516.2,263.7 517.3,262.8 518.4,262.9 519.6,262.9 520.7,263.1 521.8,262.9 522.9,262.8 524.1,262.8 525.2,262.6"/>
<polyline points="486.3,257.6 485.5,258.8 486.0,260.1 486.0,261.4 485.7,262.6 485.8,263.8 487.0,264.6 487.3,265.7 486.8,267.2 487.9,268.0 488.3,269.1 488.8,270.2 489.7,271.3 489.4,272.7 489.3,274.0 490.4,275.1 489.7,276.5 490.1,277.7 489.6,278.9 490.2,280.4 489.1,281.4 489.1,282.8 488.8,284.0 488.3,285.2 488.6,286.5 487.9,287.7 487.6,288.9 488.5,290.4 487.6,291.5 488.4,292.6 487.7,294.0 487.4,295.2 488.7,296.3 488.5,297.6 488.5,298.8 488.8,300.0"/>
<polyline points="490.1,277.7 491.2,277.4 492.4,277.4 493.5,277.2 494.6,277.2 495.8,277.5 496.9,277.0 498.0,277.1 499.2,277.6 500.3,276.4 501.5,277.2 502.6,277.0 503.7,277.5 504.9,277.0 506.0,277.0 507.1,278.0 508.3,277.3 509.4,277.3 510.5,277.8 511.6,278.3 512.8,277.6 513.9,278.3 515.0,278.0 516.1,277.9 517.3,278.6 518.4,277.9 519.5,278.5 520.6,277.4 521.7,277.6 522.9,278.0 524.0,277.7 524.9,278.7 526.2,278.6 527.4,278.7 528.6,279.0 529.4,280.1 530.7,280.0 531.4,281.4 532.7,281.4 533.4,282.5 534.9,282.3 535.7,283.0 536.2,284.3 537.3,284.8 538.1,285.6 539.5,285.7 540.3,286.5"/>
<polyline points="531.5,250.1 532.9,249.8 534.1,250.3 535.2,251.3 536.6,250.7 537.8,251.3 538.4,252.3 538.7,253.4 539.2,254.4 539.6,255.4 539.3,256.8 540.3,257.6 541.5,257.5 542.7,257.6 543.3,259.3 544.4,259.6 545.4,260.1 546.8,259.6 547.8,260.1 549.0,260.8 550.3,260.7 551.5,259.7 552.8,260.1 553.5,258.9 553.9,257.7 554.0,256.4 554.1,255.1 555.1,254.7 556.0,254.0 557.1,253.6 558.1,253.1 559.0,252.4 560.3,252.6 561.5,252.8 562.7,252.4 563.9,253.3 565.2,252.2 566.3,253.6 567.6,253.3 568.7,253.8 570.0,253.2"/>
<polyline points="552.8,260.1 552.1,261.2 551.9,262.3 552.3,263.5 553.0,264.7 551.8,265.7 552.5,266.9 552.2,268.0 551.5,269.0 551.6,270.2 551.2,271.3 551.0,272.4 549.9,273.2 550.0,274.4 550.0,275.6 549.7,276.8 549.0,277.7 548.0,278.5 548.0,279.7 547.1,280.5 547.2,281.8 546.5,282.7"/>
<polyline points="549.0,277.7 550.2,278.1 550.8,279.2 551.4,280.2 552.9,280.2 553.2,281.6 554.0,282.5 555.3,282.7 555.9,283.8 556.9,284.6 558.6,284.5 558.9,286.0 559.6,287.1 561.4,286.9 562.1,287.9 562.8,289.0 563.7,288.2 564.9,288.0 565.8,287.3 566.9,286.8 568.1,286.7 568.6,285.1 570.0,285.2"/>
<polyline points="518.9,237.5 519.8,236.5 520.9,236.3 522.0,235.9 523.0,235.5 524.6,236.4 525.6,235.9 526.5,235.0 527.7,234.2 529.0,234.7 530.2,234.2 531.4,234.0 532.7,233.9 534.0,234.2 535.2,233.8 536.3,233.4 537.1,232.6 538.1,231.9 539.2,231.6 540.3,231.3 541.4,230.4 542.8,230.7 544.1,230.6 545.3,230.0"/>
<polyline points="555.3,230.0 556.4,230.3 557.6,230.4 558.5,231.1 559.4,231.8 560.3,232.5 561.5,232.6 562.8,232.8 563.9,232.1 565.2,232.7 566.4,232.3 567.6,231.9 568.8,231.8 570.0,231.9"/>
<polyline points="477.5,284.0 478.8,284.2 480.0,284.8 481.3,284.6 482.5,285.2 483.8,285.2 484.5,286.1 485.4,286.9 485.6,288.1 486.3,289.0 487.1,290.0 488.7,290.0 489.4,291.1 490.4,291.9 491.3,292.7 492.1,293.6 493.2,294.1 494.5,293.8 495.3,294.9 496.4,295.2 497.6,295.2 498.6,295.9 499.2,297.1 500.3,297.7 500.3,299.3 501.4,300.0"/>
<polyline points="551.3,211.9 552.3,212.7 553.2,213.7 554.4,214.2 555.7,214.4 556.9,215.1 558.1,215.6 559.4,215.7 560.6,215.3 561.4,214.2 562.9,214.3 563.7,213.0 565.1,213.2 565.5,212.0 566.9,211.9 566.9,210.3 568.2,210.0 569.0,208.8 570.1,208.2 571.8,208.6 572.6,207.5 573.6,206.7 574.6,206.2 576.0,207.1 577.0,206.3 577.1,204.8 578.7,204.0 578.9,202.5 579.7,201.4 580.1,200.0"/>
<polyline points="577.0,206.3 576.6,207.6 576.6,208.9 577.3,210.1 577.6,211.3 577.8,212.7 579.5,213.4 579.5,215.0 579.4,216.7 580.1,218.2 579.6,219.3 578.8,220.3 579.1,221.8 577.8,222.5 577.6,223.8 576.3,224.2 576.4,226.0 575.3,226.5 574.2,227.1 573.1,227.7 572.6,228.9 571.3,229.1 570.0,229.0 568.8,228.7 567.6,228.2 566.9,227.1 566.2,225.9 565.1,225.1 564.3,224.2 563.8,223.2 562.5,222.9 561.2,222.4 560.0,222.0 558.8,221.3 557.9,220.6 556.8,220.2 556.4,219.0 556.1,217.7 554.8,217.5 554.3,216.4 552.9,216.2 552.5,215.1 551.7,214.0 550.7,213.1 549.4,212.5"/>
<polyline points="540.0,229.5 541.3,229.8 542.5,229.5 543.8,229.5 545.0,229.7 546.3,229.5 547.5,230.0 548.6,228.8 549.7,228.6 551.0,229.5 552.1,229.7 553.2,229.0 554.4,228.9 555.4,228.2 556.7,227.9 557.6,227.0 558.8,226.3 560.0,226.2 561.3,225.9 562.6,226.3 563.8,225.6 565.1,225.7"/>
<polyline points="555.1,229.5 556.0,230.3 556.1,231.7 556.9,232.6 558.1,233.3 559.2,232.3 560.4,232.9 561.6,232.5 562.8,233.1 563.9,232.7 565.1,232.6 566.2,232.3 567.3,232.3 568.5,232.1 569.5,232.8 570.7,232.8 571.8,232.5 572.9,232.9 574.0,232.9 575.1,233.2 576.3,232.7 576.7,231.2 578.4,231.4 578.9,230.1 579.9,229.6 581.0,229.2 581.9,228.6 583.1,228.5 583.9,227.6 585.1,227.8 586.1,227.1 587.2,226.6 588.4,226.7 589.5,226.6 590.5,225.6 591.7,225.7 592.7,225.1 593.8,225.9 594.9,225.2 596.0,224.9 597.1,225.0 598.2,225.8 599.3,225.8 600.4,226.3 601.5,225.7 602.6,226.3 603.7,225.5 604.8,225.5 605.9,225.6 607.0,225.6 608.1,226.5 609.2,226.8 610.3,226.3 611.7,226.6 612.7,225.5 614.1,226.1 615.2,225.1 616.5,225.1 617.4,223.8 618.4,222.6"/>
<polyline points="580.1,215.0 581.2,214.3 581.2,212.7 582.0,211.8 583.3,211.3 584.8,211.1 585.7,209.8 587.1,209.4 588.6,209.9 590.0,210.7"/>
<polyline points="571.4,237.6 572.3,238.5 573.2,239.3 574.8,239.3 575.5,240.4 576.4,241.4 577.5,241.7 578.5,242.2 579.7,242.2 580.6,243.2 581.4,244.1 582.7,243.9 583.8,244.4 584.7,245.2 586.1,245.3 587.0,246.1 587.7,247.3 588.9,247.7 590.2,248.1 590.2,249.8 591.0,250.6 592.7,250.6 592.7,252.3 594.0,252.7 595.2,252.3 596.5,252.7 597.8,252.5 598.9,251.7 600.3,252.0 601.5,251.8 602.7,251.4 604.0,251.7 605.2,250.7 606.6,251.2 607.9,251.3 609.1,250.7 610.3,250.2 611.3,249.3 611.7,247.9 613.1,247.3 614.0,246.4 615.3,246.2 616.5,246.7 617.8,246.7 619.0,246.5 620.3,246.4 621.3,247.1 621.4,248.4 622.0,249.4 622.8,250.2 624.1,250.3 624.7,251.8 625.9,252.0 627.3,251.9 627.9,253.5 629.5,253.0 630.3,254.0"/>
<polyline points="552.5,252.7 553.6,252.4 554.7,253.0 555.9,252.8 557.0,252.8 558.1,252.9 559.2,252.6 560.4,252.4 561.5,252.2 562.6,252.7 563.9,252.3 564.7,253.6 565.8,253.9 567.0,253.9 568.1,254.4 569.3,254.2 570.5,254.3 571.5,254.8 572.6,255.2 573.3,256.4 575.0,256.2 575.6,257.5 576.8,257.9 577.6,259.0 578.2,260.1 579.5,260.5 580.3,261.3 581.1,262.2 581.8,263.2 582.7,264.0 582.5,265.3 583.4,266.4 582.9,267.7 584.2,268.7 583.9,270.0"/>
<polyline points="540.0,256.5 541.2,256.5 542.3,256.6 543.4,257.0 544.2,258.3 545.2,258.6 546.6,258.2 547.5,259.0 548.9,258.8 550.0,259.5 551.2,260.3 552.5,260.2 552.0,261.4 552.1,262.6 552.4,263.9 553.0,265.1 552.7,266.3 553.0,267.6 552.5,268.8 552.5,270.0"/>
<polyline points="594.0,254.0 594.8,254.9 596.0,255.4 596.5,256.5 597.8,256.4 598.9,257.4 600.4,256.5 601.4,257.9 602.7,257.7 604.0,258.3 605.2,258.4 606.5,257.5 607.8,257.8 609.0,257.8 610.3,257.7 611.3,258.2 612.2,259.1 613.4,259.0 614.7,258.8 615.5,260.0 616.7,259.8 617.8,260.2 619.0,260.2 620.1,260.3 621.1,259.1 622.4,260.2 623.5,259.9 624.6,259.5 625.8,259.5 626.9,259.3 628.0,258.8 629.2,259.2 630.3,259.0 631.4,258.1 632.7,258.7 634.0,258.7 635.1,258.3 636.4,258.3 637.7,258.7 638.9,258.4 640.0,257.7"/>
<polyline points="602.7,261.5 604.1,261.2 605.2,262.3 606.5,262.3 607.9,261.6 609.1,262.3 610.3,262.7 611.5,262.8 612.6,263.1 613.3,264.3 614.0,265.3 615.3,265.2 616.6,265.2 617.7,266.3 619.0,266.3 620.5,265.7 621.6,266.5 622.8,266.6 623.7,265.8 624.9,265.8 625.9,265.1 626.9,264.8 627.8,264.0 629.0,263.5 630.4,263.9 631.7,263.9 632.9,263.5 634.1,262.7"/>
<polyline points="618.4,222.6 618.7,223.7 618.5,224.9 619.1,225.9 619.9,226.9 620.3,228.0 620.4,229.1 620.5,230.2 620.3,231.4 621.1,232.4 620.9,233.6 620.9,234.8 621.5,235.8 622.0,236.9 622.0,238.1 622.8,239.0 622.8,240.2 623.7,241.0 624.2,242.1 625.4,242.6 626.5,243.2 626.5,244.8 627.8,245.2 629.0,245.8 630.4,245.5 631.6,245.7 632.8,246.2 634.1,246.4 635.3,246.3 636.4,245.5 637.5,244.9 638.7,245.0 640.0,245.2"/>
<polyline points="615.3,215.1 615.3,216.3 616.5,217.1 616.4,218.3 617.2,219.2 617.5,220.3 617.9,221.4 617.8,222.6 619.0,222.2 620.2,221.7 621.4,221.3 622.7,221.2 624.0,221.0 625.3,221.3 626.4,221.0 627.4,220.1 628.5,219.8 629.8,220.1 630.9,219.8 632.1,219.9 633.0,218.7 634.2,218.9 635.4,218.8 636.6,219.0 637.9,218.8 638.7,220.4 640.0,220.1"/>
<polyline points="605.2,200.0 605.6,201.1 605.8,202.3 605.2,203.4 605.7,204.5 605.0,205.7 605.4,206.8 605.8,208.0 605.9,209.1 604.9,210.2 605.5,211.4 605.2,212.5 604.5,213.5 604.8,214.8 603.8,215.7 604.5,217.1 604.3,218.2 604.0,219.4 603.0,220.3 603.0,221.5 603.2,222.7 602.7,223.8"/>
<polyline points="614.0,200.0 615.3,200.5 615.4,202.1 615.8,203.3 617.0,203.8 618.5,204.2 619.3,205.2 620.0,206.2 620.3,207.5 621.4,207.9 622.4,208.6 623.1,209.4 623.3,210.8 623.8,211.9 625.3,211.9 625.3,213.5 626.6,213.8 627.6,214.3 628.4,215.2 629.3,215.9 630.3,216.4 631.6,216.3 632.6,215.3 633.9,215.3 635.2,215.4 636.6,215.5 637.4,213.9 638.7,213.9 640.0,213.8"/>
<polyline points="594.0,200.0 593.7,201.3 595.0,202.4 594.8,203.7 595.0,205.0 594.7,206.3 595.2,207.5 593.9,207.9 593.9,209.5 592.4,209.7 591.6,210.6 590.7,211.3 590.2,212.5 589.6,211.5 589.5,210.3 588.2,209.8 587.7,208.8 586.7,209.5 585.8,210.4 584.3,210.3 583.5,211.3 582.6,212.2 581.4,212.5"/>
<polyline points="630.3,200.0 631.2,200.9 630.8,202.2 631.4,203.2 631.7,204.3 632.5,205.2 632.8,206.3 634.0,206.5 635.3,206.2 636.3,207.2 637.7,206.4 638.8,207.3 640.0,207.5"/>
<polyline points="479.5,286.5 480.3,287.4 481.4,287.9 482.8,287.8 483.7,288.6 484.2,289.9 485.4,290.3 486.2,291.2 487.5,291.3 488.3,292.3 489.6,292.2 490.3,293.3 491.4,293.6 492.7,293.6 493.6,294.1 494.9,294.2 495.6,295.2 496.3,296.4 497.6,296.3 498.9,296.8 499.4,298.3 500.8,298.7 501.3,300.1 502.7,300.6 503.0,302.1 504.4,302.6 505.1,303.8 506.4,303.1 507.6,303.3 508.9,304.0 510.1,303.9 511.4,303.1 512.6,303.8 513.7,304.3 513.8,306.0 515.2,306.3 516.4,306.3 517.3,307.1 518.5,307.3 519.3,308.2 520.5,308.3 521.5,308.9 522.7,308.9 523.7,309.4 525.0,309.3 526.0,309.7 527.1,310.0 527.8,311.4 529.0,311.4 530.3,311.4 531.3,311.8 531.7,313.5 533.2,313.0 534.0,313.9 535.1,314.5 536.3,313.3 537.5,313.8 538.6,313.5 539.8,314.4 540.9,314.1 542.0,314.1 543.2,314.3 544.3,314.5 545.5,313.7 546.6,314.1 547.8,313.9 549.0,313.8 550.3,313.3 551.5,313.9"/>
<polyline points="487.5,287.5 488.2,286.3 488.1,285.0 488.6,283.8 487.9,282.4 488.6,281.3 488.8,280.0"/>
<polyline points="487.5,291.3 487.8,292.5 487.6,293.9 488.8,294.9 488.6,296.3 488.6,297.5 488.8,298.8 489.7,299.9 489.2,301.3 489.2,302.7 490.0,303.8 490.1,305.1 490.1,306.4 490.3,307.6 491.1,308.8 491.1,310.1 490.4,311.5 491.3,312.6 491.9,313.6 492.1,314.7 493.0,315.7 493.1,316.8 493.6,317.9 492.8,319.3 493.8,320.2 494.0,321.4 494.4,322.6 494.8,323.7 495.8,324.6 495.9,325.8 497.0,326.7 497.6,327.7 498.2,328.7 498.1,330.1 498.6,331.2 499.1,332.3 500.3,333.0 500.4,334.3 501.3,335.2 501.9,336.2 501.5,337.6 502.0,338.6 503.3,339.3 502.9,340.7 503.9,341.5"/>
<polyline points="488.8,298.8 490.0,299.0 491.0,299.5 491.4,301.0 492.7,301.0 493.5,301.9 494.3,302.7 495.8,302.6 496.1,304.1 497.5,304.1 498.3,305.0 499.3,305.5 500.1,306.3 501.0,307.2 502.1,307.7 503.5,307.6 504.7,307.9 505.6,308.7 506.6,309.4 507.6,310.1 508.9,310.5 509.7,311.4 509.9,312.9 510.8,313.6 511.3,314.8 512.2,315.6 513.1,316.3 514.5,316.6 515.2,317.6 516.1,318.5 516.4,319.7 516.6,320.9 517.0,322.0 517.5,323.1 518.2,324.1 517.9,325.5 518.9,326.4 520.3,326.5 521.4,327.1 522.5,328.1 523.8,328.4 525.2,328.3 526.3,327.8 527.4,327.5 528.7,328.2 529.6,326.8 530.8,326.8 532.0,327.2 533.1,327.0 534.2,326.3 535.3,325.9 536.5,326.4 537.7,326.4 538.5,327.6 539.7,327.6 540.4,328.7 541.6,328.9 542.8,328.9 542.8,330.2 544.6,330.4 545.1,331.5 545.3,332.7"/>
<polyline points="492.6,312.6 493.5,313.6 493.0,314.8 493.3,315.9 493.9,316.9 493.3,318.1 494.1,319.1 493.9,320.3 493.8,321.4 494.6,322.3 494.3,323.6 495.3,324.4 496.0,325.3 496.8,326.2 496.7,327.5 496.9,328.6 497.3,329.7 497.5,330.8 498.1,331.8 499.3,332.4 499.9,333.4 499.5,334.8 500.0,335.8 500.8,336.7 501.3,337.7"/>
<polyline points="506.4,326.4 507.7,326.5 508.7,325.7 509.7,325.0 510.8,324.4 511.8,323.9 513.2,324.4 514.5,324.4 515.6,324.0 516.6,323.0 517.7,322.7 517.9,324.0 517.9,325.4 518.9,326.4"/>
<polyline points="506.4,326.4 505.8,327.4 505.9,328.6 506.0,329.7 505.7,330.8 506.1,332.0 505.9,333.1 505.0,334.1 505.1,335.2 504.6,336.6 505.6,337.7 506.0,339.0 506.4,340.2 506.4,341.5"/>
<polyline points="505.1,335.2 506.2,335.0 507.4,335.4 508.5,334.8 509.7,335.4 510.8,334.1 511.9,334.3 513.1,334.5 514.3,334.2 515.5,334.7 516.6,334.6 517.7,334.0 518.8,334.8 519.9,334.4 521.2,333.7 522.2,334.6 523.3,334.7 524.5,334.7 525.6,334.5 526.7,335.3 527.8,335.7 529.0,335.2 530.2,334.4 531.5,335.1 532.7,334.5 534.0,334.5 535.3,334.9 536.6,334.9 537.7,334.0 538.8,334.1 539.9,333.3 541.1,334.2 542.1,332.9 543.3,333.1 544.5,333.6 545.5,332.7 546.6,332.5 547.8,332.7"/>
<polyline points="539.0,280.0 538.4,281.2 538.6,282.3 539.6,283.4 539.6,284.5 539.9,285.6 540.3,286.7 540.2,287.9 539.2,289.1 540.7,290.1 540.2,291.3 540.5,292.5 540.3,293.6 540.4,294.7 539.6,295.7 539.1,296.8 538.8,297.8 539.0,299.0 539.0,300.1 539.0,301.3 540.5,301.9 540.6,303.1 540.0,304.5 541.7,305.0 541.5,306.3 542.6,307.0 543.1,308.2 544.1,308.9 544.6,310.1 546.0,310.6 546.5,311.7 546.5,313.4 547.8,313.9 548.8,314.7 548.3,316.3 549.8,316.9 549.3,318.5 550.2,319.4 550.8,320.4 551.5,321.4 551.5,322.6 551.1,323.7 549.7,324.2 549.9,325.6 549.0,326.4 549.0,327.6 547.7,328.3 547.2,329.3 548.0,330.8 546.3,331.4 546.5,332.7"/>
<polyline points="551.5,313.9 552.4,313.1 553.1,312.1 553.6,311.0 554.8,310.4 556.3,310.3 556.6,308.9 556.8,307.7 557.1,306.6 557.6,305.6 558.1,304.6 559.1,303.8 560.3,303.3 561.7,303.9 562.7,302.5 564.0,302.4 565.3,302.6 566.6,303.1 567.8,303.0 569.0,302.8 570.1,301.6 571.3,301.6 572.7,302.3 573.8,301.4 575.0,301.3"/>
<polyline points="549.0,327.7 550.2,327.6 551.1,326.7 552.0,325.9 553.3,326.1 554.5,326.3 555.6,326.0 556.6,325.2 557.9,325.0 559.1,324.6 560.3,324.5 561.5,324.1 562.8,323.9 563.9,323.7 565.1,323.9 566.0,322.8 567.3,323.1 568.5,323.4 569.6,323.0 570.5,321.8 571.8,322.8 572.9,322.4 573.8,321.1 575.0,321.4"/>
<polyline points="527.7,280.0 528.9,280.3 529.9,280.9 531.1,281.3 531.3,283.1 532.8,283.0 533.4,284.3 535.0,283.9 536.1,284.4 536.4,286.1 537.7,286.3 538.9,286.4 540.1,286.4 541.1,285.6 542.1,285.1 543.3,285.1 544.1,283.8 545.4,284.2 546.5,283.8 546.8,282.5 546.9,281.1 547.8,280.0"/>
<polyline points="552.8,280.0 553.5,280.9 554.7,281.5 555.3,282.5 556.3,283.2 557.2,284.0 557.8,285.0 558.9,285.6 559.7,286.6 560.4,287.9 561.4,288.6 562.8,288.8 564.1,288.7 565.2,288.2 565.9,286.9 567.5,287.3 568.1,285.8 569.1,285.0 570.4,285.0 571.6,284.7 572.8,284.7 573.8,283.9 575.0,283.8"/>
<polyline points="567.8,280.0 568.1,281.1 569.1,281.8 568.7,283.3 569.9,284.0 570.4,285.0"/>
<polyline points="570.0,275.1 570.8,274.3 571.6,273.6 572.8,273.1 573.7,272.5 574.0,271.2 574.7,270.3 575.6,269.7 576.3,268.8 577.0,267.6 578.3,267.4 579.7,267.3 580.7,266.6 581.1,265.1 582.5,265.0 584.0,264.9 585.1,263.8"/>
<polyline points="581.3,267.5 582.1,268.7 582.5,270.0 583.4,271.0 584.8,270.5 586.1,270.6 587.1,271.5 588.1,272.3 589.4,272.0 590.4,272.9 591.6,273.1 592.9,272.9 594.0,273.2 595.1,273.8 596.0,274.4 597.1,274.9 598.0,275.5 598.7,276.5 599.5,277.4 600.7,277.7 602.0,277.7 602.6,278.8 603.8,278.8 604.8,279.5 605.7,280.2 607.0,280.0 608.1,280.3 608.9,281.3 609.7,282.1 610.4,283.0 611.4,283.8 611.4,285.1 611.3,286.4 610.8,287.6 611.4,288.9 612.7,289.2 613.9,289.7 615.1,290.1 616.3,290.4 617.7,290.1 618.4,291.2 619.7,291.0 620.6,291.8 622.0,291.6 622.7,292.6 622.1,293.9 622.9,295.1 622.7,296.4 622.1,297.6 623.0,298.9 623.2,300.1 622.7,301.4 622.8,302.6 623.6,303.5 624.8,304.1 625.3,305.1 625.2,306.4 625.9,307.3 626.9,308.1 626.3,309.6 627.6,310.2 627.7,311.4 628.9,310.8 630.2,310.6 631.5,310.5 632.7,310.2 633.8,309.7 634.9,309.7 636.0,309.4 637.0,308.7 637.9,307.8 639.4,308.7 640.3,307.7 641.4,307.5 642.0,306.1 643.3,306.1 644.5,306.0 645.3,305.2 646.7,305.2 647.1,303.4 648.1,302.7 649.5,302.6 650.5,301.9 651.6,301.4 652.9,301.1 653.7,300.4 654.1,299.1 655.1,298.4 656.1,297.9 657.3,297.6 657.8,296.4"/>
<polyline points="570.0,283.8 571.1,283.2 572.3,283.4 573.4,282.9 574.6,283.6 575.6,282.5 576.9,283.8 578.0,283.1 579.1,283.0 580.2,282.2 581.3,282.3 582.5,282.6 583.6,282.6 584.8,283.1 585.9,282.7 587.1,282.3 588.2,283.3 589.4,282.8 590.5,282.6 591.7,282.2 592.8,282.3 594.0,283.2 595.1,282.6 596.3,282.3 597.3,283.2 598.4,283.6 599.6,283.5 600.6,284.4 601.6,284.9 602.7,285.1 603.9,285.2 605.1,285.1 606.3,285.1 607.4,285.3 608.3,286.3 609.4,286.5 610.5,286.8 611.4,287.6"/>
<polyline points="570.0,301.4 571.0,302.2 572.3,301.5 573.2,302.7 574.3,303.1 575.7,302.2 576.5,303.7 577.8,303.2 579.0,303.2 580.0,303.9 581.3,303.9 582.5,304.1 583.4,305.2 584.5,305.4 585.4,306.5 586.6,306.9 588.1,306.2 589.0,307.1 590.1,307.7 591.3,307.8 592.4,307.8 593.5,308.2 594.6,308.5 595.6,309.4 596.8,309.1 598.0,309.1 599.1,309.5 600.1,310.2 601.2,310.5 602.2,311.0 603.4,310.9 604.3,311.9 605.6,311.6 606.4,312.6 607.6,312.7 608.1,313.7 609.3,314.3 609.2,315.7 610.3,316.4 610.7,317.4 611.3,318.4 611.9,319.4 612.7,320.2 613.3,321.2 614.3,321.9 613.8,323.4 614.2,324.4 615.2,325.2 616.0,326.0 616.8,326.9 617.9,327.3 618.1,328.8 619.2,329.4 620.2,330.0"/>
<polyline points="610.2,307.7 611.4,307.0 612.8,307.6 614.1,307.6 615.1,306.4 616.4,306.4 617.8,306.9 618.9,305.9 620.1,305.2 621.5,305.8 622.7,305.2"/>
<polyline points="610.2,307.7 611.2,308.4 611.6,309.6 612.6,310.3 613.9,310.6 614.3,311.9 615.2,312.7 616.0,313.6 617.3,313.5 618.3,314.0 619.1,314.9 620.4,314.7 621.4,315.2 622.3,316.0 623.0,317.0 623.6,318.0 625.1,318.2 626.1,318.9 626.5,320.2 626.9,321.4 627.9,322.2 629.0,323.0 629.0,324.5 630.2,325.2 630.0,326.6 630.8,327.6 630.5,329.0 631.5,330.0"/>
<polyline points="603.9,260.0 603.2,261.2 603.1,262.4 603.6,263.8 603.8,265.1 602.6,266.2 602.6,267.5 603.4,268.3 604.7,268.3 605.6,269.0 606.6,269.6 607.6,270.0 608.7,269.5 609.9,270.0 611.0,269.7 612.1,269.3 613.1,268.8 614.3,269.3 615.4,268.8 616.6,269.3 617.7,268.8 618.3,267.5 619.4,266.8 620.1,265.6 621.4,265.0 622.5,264.9 623.6,265.1 624.8,264.4 625.9,264.3 627.0,265.0 628.1,264.6 629.3,265.0 630.4,264.5 631.5,265.0 631.8,263.6 633.0,263.0 634.2,262.4 634.9,261.3 635.2,260.0"/>
<polyline points="621.4,265.0 621.8,266.1 622.4,267.2 623.3,268.1 623.4,269.4 623.8,270.5 623.3,272.0 624.9,272.7 624.1,274.2 625.2,275.1 626.2,275.7 627.1,276.3 628.2,276.7 628.6,278.2 630.1,277.8 630.8,278.9 631.8,279.5 632.7,280.1 633.7,280.8 634.3,281.7 634.0,283.3 634.9,284.1 635.6,285.0 636.0,286.1 637.7,286.3 637.8,287.6 638.3,288.8 639.0,289.8 640.4,290.4 640.8,291.6 641.5,292.6 641.1,294.0 642.4,295.0 642.1,296.4 642.8,297.6 642.8,298.8 641.6,299.5 641.6,300.8 640.8,301.7 640.3,302.7"/>
<polyline points="617.7,281.3 618.9,280.9 620.3,281.4 621.5,281.1 622.7,280.5 624.0,280.6 625.2,280.1 626.1,280.9 626.5,282.1 628.0,282.3 628.5,283.5 629.3,284.4 630.2,285.1 630.0,286.4 630.0,287.8 629.0,288.9"/>
<polyline points="655.3,260.0 655.6,261.3 654.7,262.5 655.1,263.8 654.1,264.9 654.3,266.2 654.1,267.5 653.6,268.9 654.0,270.1 654.4,271.4 655.1,272.5 655.8,273.7 655.3,275.1 655.6,276.2 655.7,277.4 655.8,278.5 657.2,279.2 657.6,280.3 656.8,281.8 657.8,282.6 657.0,283.4 656.8,284.6 656.0,285.4 656.3,286.8 655.2,287.6 654.6,288.5 654.2,289.5 654.3,290.8 653.8,291.8 652.8,292.6 652.4,293.8 651.8,295.0 652.7,296.4 652.7,297.7 652.4,298.9 651.6,300.1"/>
<polyline points="655.3,297.6 656.4,296.9 656.7,295.6 657.6,294.7 659.0,294.3 659.4,293.0 659.8,291.7 661.0,291.2 661.6,290.1 662.1,288.9 663.3,288.6 664.6,288.5 665.4,287.6"/>
<polyline points="645.3,305.2 646.5,305.5 647.5,306.1 648.0,307.4 649.1,307.9 649.4,309.3 651.1,309.0 651.6,310.2 651.4,311.5 652.2,312.7 651.7,314.0 652.5,315.2 652.4,316.5 652.8,317.7 652.9,318.8 653.0,320.0 652.5,321.1 651.9,322.1 652.5,323.3 652.5,324.4 652.2,325.5 652.5,326.7 652.1,327.8 651.6,328.9 651.6,330.0"/>
<polyline points="657.8,301.4 658.5,302.2 659.3,303.1 660.4,303.5 661.5,304.0 662.2,304.8 662.7,306.0 663.6,306.6 664.1,307.7 665.3,308.0 666.5,307.8 667.6,308.8 668.8,308.8 670.0,308.9"/>
<polyline points="662.8,260.0 662.9,261.2 663.0,262.3 663.6,263.3 664.1,264.4 664.5,265.5 665.2,266.5 664.4,267.9 665.1,268.9 665.4,270.0 666.5,269.4 667.7,270.6 668.9,270.1 670.0,270.0"/>
<polyline points="588.8,288.2 589.8,289.0 591.0,289.4 592.3,289.6 592.7,291.4 594.4,290.9 595.3,291.8 596.3,292.6"/>
<polyline points="585.0,210.2 586.3,210.9 587.5,209.6 588.8,210.2 590.0,210.2 591.3,210.2 592.0,209.0 593.6,208.7 594.0,207.3 595.0,206.4 596.6,206.6 597.5,208.0 596.9,209.2 596.9,210.7 595.3,211.4 595.0,212.7 593.8,212.7 592.7,213.2 592.3,214.8 590.9,214.5 590.0,215.2 588.8,214.6 588.0,213.6 586.8,213.0 586.0,212.0"/>
<polyline points="597.5,185.1 598.0,186.3 598.5,187.5 598.0,188.9 599.0,190.0 597.9,191.5 598.8,192.6 600.0,193.2 599.3,194.9 600.9,195.3 601.6,196.2 601.3,197.7 602.1,198.5 602.3,199.6 603.2,200.4 603.8,201.4 603.9,202.6 605.0,203.5 604.4,204.8 604.9,205.8 604.5,207.1 606.2,207.9 606.4,209.0 605.8,210.4 606.3,211.4 605.5,212.4 606.1,213.6 605.5,214.7 605.6,215.8 605.7,216.9 605.5,218.0 605.1,219.1 605.1,220.2 604.9,221.6 603.8,222.4 602.5,223.0 602.3,224.4 601.3,225.2"/>
<polyline points="598.8,192.6 599.9,193.1 601.1,193.3 602.1,194.0 603.0,194.9 604.0,195.6 604.9,196.4 606.3,196.3 607.4,196.8 608.7,197.0 609.7,197.7 610.9,197.9 611.9,198.7 612.8,199.7 613.9,200.1 614.8,201.0 616.1,201.3 617.2,202.0 618.3,202.7 618.9,203.9 620.0,204.6 620.4,205.9 621.4,206.7 621.4,208.2 622.6,208.9 623.4,209.8 624.5,210.4 625.2,211.3 626.5,211.7 626.6,213.3 627.7,213.9 628.5,215.0 629.8,215.3 630.5,216.4 631.9,216.7 632.7,217.7 633.1,218.9 633.1,220.2 633.2,221.4 632.7,222.7 631.7,222.2 630.6,221.8 629.6,221.3 628.2,221.8 627.5,220.5 626.3,220.6 625.2,220.2"/>
<polyline points="613.9,200.1 614.4,199.0 615.1,198.0 615.7,196.9 616.0,195.7 616.8,194.8 617.6,193.8 618.7,193.9 619.8,193.8 621.0,194.0 621.9,192.7 623.2,193.6 624.3,193.3 625.3,193.1 626.4,192.6 627.1,193.8 628.8,193.4 629.3,194.8 630.3,195.6 631.9,195.2 632.7,196.3"/>
<polyline points="603.8,201.4 605.1,201.5 606.3,202.1 607.6,201.1 608.8,201.9 610.1,201.4 611.6,201.5 612.6,200.4 613.9,200.1"/>
<polyline points="610.1,185.1 611.5,184.8 612.7,185.2 613.8,186.3 615.2,185.9 616.4,186.3 617.1,187.2 617.5,188.3 617.3,189.6 618.7,190.1 618.9,191.3 618.9,192.9 617.6,193.8"/>
<polyline points="600.1,183.8 601.3,184.3 602.3,183.2 603.4,183.2 604.6,183.9 605.6,182.8 606.7,182.3 608.0,183.4 608.9,182.3 610.1,182.5 610.9,181.6 612.4,182.1 612.9,180.6 614.4,181.0 615.1,180.0"/>
<polyline points="585.0,227.7 586.1,227.2 587.2,227.0 588.3,226.6 589.6,226.9 590.7,226.7 591.8,226.2 593.0,226.1 594.0,225.6 595.3,226.2 596.5,226.1 597.5,225.2 598.8,225.6 600.0,225.7 601.3,225.2 602.4,224.6 603.5,224.8 604.6,224.8 605.7,224.7 606.8,225.9 607.9,225.8 609.0,225.8 610.1,225.2 611.2,224.9 612.1,223.9 613.3,224.0 614.2,223.1 615.6,224.0 616.4,222.7 617.6,222.7 618.5,221.9 619.9,222.3 620.4,220.8 621.9,221.3 622.6,220.2 623.8,220.2 624.8,221.0 626.1,220.5 626.9,221.9 628.2,221.4 629.4,221.6 630.4,222.4 631.5,222.6 632.7,222.7 634.0,222.5 635.3,222.6 636.4,223.5 637.8,222.9 638.9,224.3 640.2,224.0 641.2,223.3 642.2,222.6 643.4,222.3 644.4,221.6 645.6,221.4 646.8,221.2 647.8,220.5 649.0,220.2 650.0,220.9 650.9,221.6 651.5,222.7"/>
<polyline points="615.1,215.2 615.4,216.3 615.2,217.5 616.0,218.5 615.8,219.7 616.5,220.7 617.3,221.7 617.5,222.9 616.8,224.2 617.6,225.2 618.0,226.3 618.5,227.3 618.6,228.4 618.5,229.6 619.6,230.5 619.9,231.6 620.1,232.7 620.6,233.7 621.5,234.5 621.1,235.9 621.6,236.9 621.9,237.9 622.3,238.9 622.6,240.0"/>
<polyline points="637.7,224.0 638.0,225.2 637.9,226.5 638.9,227.6 638.0,229.1 639.0,230.2 640.3,230.2 640.8,231.7 642.2,231.3 642.8,232.6 644.0,232.7 645.2,233.0 646.3,233.3 646.9,234.5 647.7,235.4 648.6,236.0 649.6,236.6 650.5,237.3 652.2,236.7 652.8,237.8"/>
<polyline points="650.2,213.9 650.5,215.0 651.1,216.0 650.3,217.3 650.9,218.3 650.7,219.5 650.7,220.6 650.6,221.7 651.5,222.7 651.5,224.0 651.5,225.3 652.2,226.5 653.2,227.6 652.8,229.0 651.8,229.8 652.5,231.3 652.1,232.3 650.6,232.9 650.9,234.3 650.2,235.2 650.9,236.2 652.4,236.3 653.0,237.3 653.4,238.6 654.9,238.7 655.3,240.0"/>
<polyline points="655.3,226.5 656.0,227.4 656.2,228.7 657.8,228.9 657.9,230.2 658.6,231.2 659.4,231.9 660.3,232.7 660.8,233.8 661.8,234.6 663.3,234.7 664.0,235.8 664.4,237.0 665.3,237.8"/>
<polyline points="675.3,203.9 676.1,205.0 677.6,204.3 678.5,205.3 679.8,205.0 680.5,206.4 681.8,206.3 682.8,206.8 683.8,207.4 685.0,207.6"/>
<polyline points="680.4,224.0 681.7,224.3 682.0,225.7 682.9,226.6 683.7,227.4 685.0,227.7"/>
<polyline points="676.3,202.5 677.5,202.8 678.5,203.3 679.6,203.8 680.1,205.3 681.5,205.3 682.5,205.8 683.5,206.5 684.4,207.3 685.7,207.4 686.7,208.0 687.6,208.8 688.8,209.4 690.0,209.7 691.4,209.2 692.8,209.1 693.9,210.0 695.3,209.9 696.1,209.1 697.1,208.3 698.0,207.4 699.4,207.5 700.1,206.3"/>
<polyline points="693.9,210.0 694.2,211.2 694.8,212.4 695.2,213.7 695.1,215.0 695.1,216.3 694.3,217.1 693.8,218.2 692.4,218.6 692.1,219.8 691.6,220.8 690.6,221.6 690.1,222.6 688.8,222.6 687.6,222.8 686.4,223.2 685.1,223.4 683.9,223.6 682.6,223.8 681.5,224.8 681.3,226.3 682.5,226.3 683.2,227.6 684.6,227.3 685.3,228.5 686.8,227.9 687.6,228.9 688.4,229.9 689.1,230.8 689.6,232.1 690.9,232.6 691.3,233.9 692.4,234.2 693.5,234.7 694.1,235.9 695.1,236.4 694.7,237.6 695.2,239.1 694.7,240.3 693.9,241.4 692.8,242.3 691.1,241.6 690.1,242.7"/>
<polyline points="700.1,207.5 700.4,208.6 700.4,209.7 701.0,210.7 700.6,211.9 700.6,213.0 701.0,214.1 701.4,215.1 702.5,215.9 702.2,217.2 702.5,218.3 703.5,219.2 702.8,220.6 703.8,221.4 703.9,222.6 704.7,223.5 704.8,224.8 705.4,225.9 706.1,226.9 706.1,228.2 707.1,229.0 707.7,230.1"/>
<polyline points="665.0,233.9 665.7,235.1 666.5,236.2 666.3,237.6 667.5,237.9 668.8,237.9 670.0,238.4 671.3,238.4 672.5,238.9 673.8,238.7 674.8,239.3 675.7,239.9 676.8,240.4 677.5,241.4 678.7,242.2 680.0,242.0 681.4,241.8 682.5,242.7 683.8,242.7 685.1,242.9 686.3,242.0 687.6,243.1 688.8,242.3 690.1,242.7 691.5,243.2 692.5,241.7 693.8,241.6 695.1,241.3 696.4,241.4 697.6,241.5 698.6,241.0 699.5,240.3 700.3,239.2 701.5,239.2 702.6,238.9 703.9,238.9 705.0,237.6 706.6,238.5 707.7,237.6 708.5,238.6 709.4,239.2 710.6,239.4 711.6,239.8 712.7,240.2 713.4,241.3 714.9,240.9 715.8,241.4 717.0,241.7 717.7,242.7"/>
<polyline points="665.0,245.2 665.9,246.0 665.6,247.4 667.0,247.9 666.7,249.4 667.5,250.2 668.2,249.3 669.6,248.9 670.0,247.7 670.7,246.8 671.0,245.6 671.6,244.6 670.8,243.2 671.5,242.2 672.0,241.2 672.5,240.2"/>
<polyline points="696.4,241.4 696.5,242.7 696.1,243.9 695.8,245.2 696.0,246.4 695.8,247.7 696.1,248.9 696.4,250.2 697.1,251.1 697.4,252.2 697.6,253.4 698.0,254.4 698.9,255.2 699.9,255.7 700.9,256.3 701.6,257.2 702.6,257.7 702.8,259.0 701.6,260.1 702.7,261.6 701.6,262.7 701.6,264.0 701.4,265.2 702.1,266.3 701.9,267.6 702.3,268.8 702.6,270.0"/>
<polyline points="707.7,237.6 707.4,238.9 707.9,240.0 708.6,240.9 708.6,242.1 708.9,243.2 710.3,244.0 710.2,245.2 709.9,246.5 710.1,247.8 710.1,249.1 710.6,250.3 711.4,251.4 711.4,252.7 712.1,253.9 711.6,255.2 712.5,256.4 711.9,257.8 712.4,259.0 712.7,260.2 711.8,261.0 711.9,262.3 711.5,263.3 710.2,263.9 710.2,265.2 711.5,265.4 712.7,265.0 714.0,265.3 715.2,265.1 716.5,265.4 717.7,265.2 718.9,265.4 720.3,265.3 721.3,266.6 722.6,266.6 723.9,266.7 725.2,266.5 726.4,265.9 727.6,265.4 729.0,265.9 730.2,265.2 731.0,266.2 732.1,266.4 733.5,266.4 734.1,267.6 735.3,267.8"/>
<polyline points="722.7,240.2 723.4,241.2 724.4,242.1 724.9,243.3 725.8,244.2 726.5,245.2 726.8,246.3 727.2,247.4 727.4,248.5 729.0,248.9 729.0,250.2 729.3,251.3 729.1,252.6 729.8,253.5 730.3,254.5 730.3,255.7 731.8,256.4 731.5,257.7 730.6,258.6 730.2,259.8 729.8,260.9 729.6,262.1 728.6,263.0 728.7,264.4 727.7,265.2"/>
<polyline points="668.8,270.0 669.5,269.0 669.7,267.8 671.2,267.4 671.7,266.3 671.9,265.1 672.8,264.3 673.0,263.0 673.8,262.2 674.0,260.9 675.0,260.2 676.3,260.2 677.4,259.6 678.5,259.2 679.2,257.8 680.7,258.3 681.3,256.8 682.7,257.1 683.8,256.5 684.8,257.4 686.2,257.9 686.7,259.2 687.6,260.2 687.0,261.4 687.4,262.6 687.9,263.9 687.1,265.1 687.8,266.3 687.0,267.6 687.7,268.8 687.6,270.0"/>
<polyline points="687.6,265.0 688.4,266.1 687.3,267.6 688.8,268.6 688.8,269.9 688.2,271.3 688.8,272.5 689.8,273.2 689.7,274.5 689.8,275.7 690.7,276.6 691.3,277.5 690.3,278.1 689.0,277.9 687.9,278.2 687.0,278.9 685.9,279.2 685.0,280.0 683.8,280.1 682.6,280.8 681.3,281.3 681.4,282.7 682.2,283.5 684.0,283.5 684.5,284.6 685.2,285.5 685.2,287.0 686.3,287.6 687.2,288.5 687.8,289.5 687.6,291.0 688.9,291.7 688.4,293.3 689.6,294.0 690.1,295.1 689.3,296.2 689.2,297.5 689.9,298.9 688.8,300.0 689.1,301.4 688.8,302.6 688.4,303.8 687.9,304.8 686.4,305.1 685.9,306.1 685.5,307.3 684.1,307.7 683.8,308.9 682.9,309.7 681.7,309.8 680.9,310.7 679.7,310.8 678.3,310.4 677.5,311.4 676.8,310.5 675.7,309.9 675.0,308.9 674.8,307.7 673.7,307.1 673.7,305.6 672.5,305.1 672.2,303.8 673.7,303.1 673.7,301.9 674.4,301.0 674.1,299.7 674.0,298.5 675.0,297.6 673.7,297.0 673.3,295.6 671.7,295.3 671.3,293.9 670.5,295.0 669.0,294.8 667.9,295.3 666.8,295.9 665.8,296.5 665.0,297.6"/>
<polyline points="691.3,277.5 692.2,276.7 693.4,276.2 694.1,275.2 694.8,274.2 695.5,273.3 696.4,272.5 697.7,272.4 698.7,272.9 699.6,273.7 700.4,274.4 701.4,275.0 702.1,274.0 703.7,274.6 704.5,273.6 705.6,273.3 706.4,272.5 706.8,273.7 708.4,273.9 708.5,275.4 709.2,276.3 710.8,276.4 711.4,277.5 712.5,278.3 712.3,279.8 712.8,281.0 713.5,281.9 714.7,282.7 715.2,283.8 716.2,284.3 717.5,284.0 718.5,284.5 719.5,285.1 720.4,285.9 721.8,285.4 722.7,286.3 723.2,287.7 725.1,287.7 725.1,289.6 726.5,290.1 726.9,291.4 726.0,292.6 726.0,293.9 725.8,295.1 726.5,296.4 726.5,297.6 726.0,298.6 726.4,299.8 725.5,300.8 726.3,302.0 725.0,302.9 725.2,304.1 725.2,305.2"/>
<polyline points="702.6,265.0 703.9,265.3 703.7,267.0 705.2,267.2 706.2,267.7 706.8,268.7 707.8,269.2 708.3,270.3 708.9,271.3 709.3,272.5 709.5,273.7 710.6,274.5 711.0,275.7 711.7,276.7 712.7,277.5"/>
<polyline points="726.5,297.6 725.3,297.7 724.3,298.5 723.2,299.1 722.1,299.6 720.8,299.4 719.9,300.3 718.5,299.9 717.5,300.9 716.3,300.9 715.2,301.4 714.4,302.3 713.5,303.2 713.2,304.5 712.3,305.4 711.0,305.9 710.8,307.3 709.5,307.8 708.9,308.9 707.6,308.8 707.0,310.0 705.6,309.8 704.8,310.7 703.6,310.8 702.9,311.9 701.7,312.1 700.8,312.7 700.1,313.8 698.9,313.9 697.9,314.6 696.9,315.2 696.0,316.0 694.8,316.5 693.7,316.9 692.8,317.7 691.8,318.4 691.4,319.9 690.1,320.2 689.1,320.9 688.4,322.0 687.2,322.6 687.5,324.4 686.5,325.2 684.8,325.4 684.7,326.9 683.8,327.7 682.8,328.4 682.1,329.4 681.6,330.5 680.7,331.4 679.8,332.2 678.5,332.7 678.2,334.1 677.5,335.0"/>
<polyline points="677.5,311.4 678.4,312.2 679.8,311.8 680.7,312.8 681.8,313.0 682.8,313.5 683.8,314.1 685.1,313.9 686.1,314.7 685.3,316.3 686.2,317.1 687.1,318.0 687.2,319.1 687.6,320.2"/>
<polyline points="665.0,317.7 666.3,317.3 667.6,317.7 668.7,318.8 669.9,318.8 671.2,319.2 672.5,318.9 673.7,318.9 674.8,319.2 675.7,320.0 676.7,320.6 677.6,321.4 678.8,321.5 679.8,322.3 680.0,323.7 681.0,324.6 682.1,325.3 682.6,326.5 681.3,326.9 680.9,328.5 679.5,328.6 678.8,329.8 677.5,330.2"/>
<polyline points="708.9,310.2 710.2,310.5 710.6,311.8 711.4,312.7 712.1,313.7 713.2,314.2 713.9,315.2 713.9,316.6 714.6,317.5 716.0,318.2 716.7,319.1 716.0,320.9 717.3,321.6 717.7,322.7 719.0,323.0 719.8,323.7 720.2,325.1 721.6,325.2 722.3,326.1 722.9,327.2 724.0,327.7 725.0,328.3 725.6,329.3 726.2,330.4 727.3,331.0 728.3,331.5 729.2,332.2 730.2,332.8"/>
<polyline points="725.2,312.7 726.1,311.9 727.3,311.9 728.3,311.4 729.3,310.8 730.2,310.2 731.2,309.7 732.4,309.5 733.1,308.3 734.4,308.5 735.3,307.7 735.7,306.3 734.1,305.3 734.2,304.0 735.0,302.5 734.0,301.4 735.1,300.5 736.6,301.3 737.8,300.7 738.9,299.7 740.3,300.1"/>
<polyline points="725.2,312.7 725.2,314.0 726.4,315.1 725.3,316.5 726.4,317.6 725.7,319.1 726.5,320.2 727.0,321.6 728.7,321.7 729.4,322.9 730.2,324.0 731.5,323.7 732.7,324.8 734.1,324.0 735.4,324.2 736.6,324.4 737.8,325.2 739.0,325.3 739.7,324.0 740.8,323.7 741.9,323.5 743.0,323.2 744.0,322.7 744.7,321.6 746.1,321.1 746.1,319.6 747.0,318.7 747.8,317.7 749.0,317.3 749.2,315.8 750.0,314.9 751.5,314.7 751.8,313.3 752.8,312.7"/>
<polyline points="742.8,296.4 744.2,296.8 745.4,296.4 746.5,295.6 747.8,295.3 748.9,294.7 750.3,295.1 750.2,296.4 751.2,297.2 751.8,298.2 752.4,299.1 752.8,300.2 752.8,301.4 752.2,302.5 753.4,303.7 752.7,304.8 752.6,305.9 752.8,307.0 752.8,308.2 753.0,309.3 753.3,310.4 752.3,311.6 752.8,312.7"/>
<polyline points="742.8,265.0 742.4,266.3 743.1,267.5 743.8,268.7 743.0,270.1 744.2,271.2 744.0,272.5 744.9,273.4 744.7,274.8 744.8,276.0 745.6,277.0 746.7,277.9 745.9,279.5 747.4,280.2 747.6,281.4 747.8,282.6 747.7,284.0 748.5,284.9 749.1,286.0 750.5,286.6 750.0,288.2 751.2,289.0 751.6,290.1 752.0,291.5 750.5,292.5 750.0,293.7 750.3,295.1"/>
<polyline points="742.8,296.4 743.5,297.5 742.9,298.6 742.2,299.7 743.1,300.8 743.1,302.0 742.4,303.1 742.9,304.2 742.1,305.3 742.8,306.4 742.6,307.6 742.9,308.7 743.4,309.8 744.5,310.7 744.1,312.0 744.6,313.0 745.0,314.1 745.3,315.2 744.8,316.2 744.7,317.4 744.5,318.5 743.1,319.2 743.4,320.5 742.8,321.5"/>
<polyline points="693.9,324.0 695.3,323.7 696.2,325.2 697.6,324.7 698.8,325.2 700.1,325.2 700.7,326.4 701.3,327.6 701.3,328.9 701.4,330.2 702.3,331.0 703.7,330.6 704.4,331.9 705.8,331.4 706.6,332.6 708.0,332.0 708.9,332.8"/>
<polyline points="717.7,308.9 718.3,307.9 718.7,306.8 719.4,305.9 720.6,305.3 721.1,304.3 722.0,303.5 722.7,302.6"/>
<polyline points="665.0,270.0 665.8,269.1 666.9,268.7 667.9,268.3 669.3,268.5 670.0,267.5 669.4,266.2 670.0,265.0"/>
<polyline points="715.2,265.0 716.2,265.6 716.7,266.8 717.8,267.2 719.0,267.6 719.2,269.2 721.0,268.8 721.5,270.0 722.7,269.3 723.9,268.9 725.2,269.3 726.6,269.7 727.7,268.7 729.0,268.8 728.3,267.6 728.6,266.1 727.7,265.0"/>
<polyline points="648.8,320.0 649.6,321.1 649.9,322.4 649.2,323.8 650.2,324.9 649.8,326.3 650.0,327.5 650.9,328.4 650.6,329.7 650.6,330.9 651.5,331.8 652.1,332.8 652.0,334.1 652.5,335.1 652.6,336.3 653.8,337.0 653.9,338.2 654.1,339.3 654.3,340.5 655.0,341.4 655.0,342.6 655.0,343.9 655.8,345.0 655.1,346.5 656.1,347.6 656.5,348.8 656.3,350.1"/>
<polyline points="658.8,320.0 659.9,320.7 660.3,321.7 660.7,322.8 660.3,324.3 661.3,325.0 662.4,325.2 663.5,325.5 664.4,326.6 665.5,326.9 666.7,326.9 668.0,326.5 669.1,326.9 670.1,327.5 671.3,327.8 672.7,327.8 673.9,328.3 675.1,328.8 676.3,328.2 677.5,328.0 678.9,328.5 680.1,328.1 681.3,327.6 682.6,327.5 683.6,326.7 684.7,326.2 685.8,325.5 686.3,324.0 687.7,323.8 689.0,323.5 689.7,322.2 690.6,321.3 692.1,321.3 692.7,320.0"/>
<polyline points="663.8,338.8 665.0,339.4 666.4,339.1 667.7,338.9 668.9,339.7 670.1,340.1 671.1,339.6 672.1,339.1 673.0,338.3 674.3,338.5 675.2,337.7 676.4,337.6 677.5,336.8 677.9,335.6 678.4,334.4 679.8,333.8 680.1,332.5 679.4,331.3 678.9,330.0"/>
<polyline points="676.4,337.6 677.8,337.8 678.6,338.8 679.8,339.3 680.5,340.5 681.4,341.3 682.5,342.2 683.7,342.6 685.1,342.5 686.4,342.6 687.3,343.5 687.6,344.6 688.1,345.6 688.2,346.7 688.3,347.9 688.9,348.9 689.4,350.3 688.5,351.4 688.4,352.7 687.9,353.9 687.4,355.1 687.7,356.4 688.2,357.6 688.2,358.9 688.9,360.1 688.9,361.4"/>
<polyline points="686.4,342.6 686.8,341.5 687.4,340.6 687.0,339.2 688.1,338.4 688.5,337.4 688.9,336.3 689.3,335.0 690.1,334.1 691.6,333.6 691.8,332.2 692.7,331.3 693.9,330.6 695.2,330.5 696.5,330.6 697.7,330.1 699.0,330.0 700.3,330.0 701.5,330.3 702.8,330.4 704.0,331.0 705.2,331.3 706.0,330.4 705.9,329.1 707.2,328.5 707.7,327.5"/>
<polyline points="695.2,323.8 696.3,324.0 696.9,325.4 697.9,325.9 699.4,325.3 700.2,326.3 700.3,327.5 701.3,328.4 702.0,329.4 701.4,330.9 701.7,332.1 702.3,333.1 703.0,334.2 702.9,335.4 704.0,336.3 704.9,337.1 705.8,338.0 706.9,338.8 707.7,339.8 709.0,340.1 708.6,341.3 709.6,342.3 709.9,343.3 709.5,344.5 709.6,345.6 710.1,346.7 709.5,347.9 710.2,348.9 709.3,350.0 709.1,351.3 709.0,352.6"/>
<polyline points="715.3,320.0 715.4,321.3 715.4,322.5 716.4,323.7 715.6,325.1 716.9,326.2 716.5,327.5 715.5,328.4 715.4,329.6 715.4,330.9 715.1,332.1 714.0,332.9 713.8,334.1 713.0,335.1 712.8,336.3 712.3,337.7 710.5,337.8 710.0,339.2 709.0,340.1"/>
<polyline points="716.5,327.5 717.6,327.3 718.7,327.6 719.8,327.2 720.9,326.8 722.0,326.4 723.1,326.5 724.1,325.8 725.3,326.3 726.5,325.7 727.9,326.3 729.0,325.1 730.2,324.8 731.6,325.7 732.8,325.0 733.9,325.2 735.0,325.8 736.0,326.2 737.0,326.7 738.3,326.5 739.2,327.5 740.4,327.5"/>
<polyline points="732.8,330.0 733.2,331.3 731.7,332.1 732.1,333.4 731.4,334.3 731.5,335.6 730.6,336.5 730.8,337.8 730.3,338.8 729.6,339.8 729.3,341.0 728.0,341.7 727.5,342.8 727.6,344.3 726.6,345.1 726.5,346.4 726.4,347.7 727.7,348.8 728.0,350.1 727.8,351.4"/>
<polyline points="735.3,332.5 734.8,333.7 734.9,334.8 736.3,335.8 735.5,337.0 735.4,338.2 736.5,339.2 735.9,340.4 736.8,341.4 736.6,342.6 735.8,343.6 735.7,344.8 735.4,345.9 735.4,347.2 734.3,348.1 733.8,349.2 733.9,350.5 733.9,351.7 732.8,352.6 733.4,353.9 733.2,355.1 732.1,356.4 732.4,357.6 732.2,358.9 732.4,360.1 732.8,361.4"/>
<polyline points="660.1,348.9 661.4,348.9 662.3,349.8 663.0,351.1 664.2,351.5 665.1,352.2 666.3,352.5 667.6,352.6 667.8,353.8 668.3,354.9 668.6,356.1 669.8,356.9 670.9,357.7 671.0,359.0 671.3,360.2 672.6,360.8 673.1,362.0 673.5,363.3 674.6,364.0 675.1,365.2"/>
<polyline points="671.3,360.2 672.5,360.0 673.6,359.9 674.7,360.4 675.8,360.8 676.9,361.0 678.0,361.7 679.2,360.5 680.3,360.9 681.4,361.4 682.5,360.6 684.0,361.6 685.2,361.0 686.4,360.8 687.7,360.9 688.9,360.2 690.0,359.5 691.1,360.8 692.2,359.9 693.3,360.4 694.4,360.1 695.5,360.6 696.6,359.9 697.7,360.2 698.5,361.1 699.0,362.0 698.9,363.4 699.8,364.2 700.2,365.2"/>
<polyline points="625.0,229.8 626.4,229.7 627.5,230.4 628.6,231.2 629.8,231.5 630.9,231.8 631.8,232.5 632.7,233.3 633.9,233.5 634.8,234.2 636.2,234.0 637.1,234.7 637.8,235.8 638.7,236.5 640.0,236.7 641.3,236.7 641.9,237.9 643.1,238.6 642.8,240.1 643.3,241.2 644.4,241.9 645.2,243.0 646.4,243.6 647.4,244.4 648.4,245.2 647.4,246.1 646.1,245.7 644.8,245.4 644.0,246.9 642.7,246.8 641.8,247.5 640.7,248.0 640.3,249.2 639.1,249.5 638.1,250.4 637.1,251.0 635.7,250.8 634.7,251.6 633.5,250.8 632.2,250.7 630.8,251.3 629.5,250.6 628.2,250.8 627.3,249.8 626.0,249.9 625.0,249.2"/>
<polyline points="641.1,238.7 639.8,239.0 639.1,240.2 638.1,241.1 637.2,242.0 635.6,241.7 634.7,242.7 634.1,243.9 635.0,245.3 634.7,246.5 633.9,247.6 634.4,248.9 634.9,250.2 634.7,251.6 634.4,252.9 635.2,254.3 634.7,255.6 635.4,256.8 636.2,257.8 637.1,258.9 636.2,259.9 634.8,260.1 634.2,261.4 633.1,262.1 632.3,262.9 631.3,263.5 630.7,264.6 629.8,265.3 628.4,265.1 627.7,263.5 626.4,263.2 625.0,262.9"/>
<polyline points="640.3,249.2 641.2,250.1 642.2,250.8 643.0,251.7 644.3,252.2 645.5,252.7 646.0,254.0 647.1,254.6 648.0,255.5 649.6,255.0 650.2,256.7 651.6,256.5 652.5,257.2 652.7,258.6 653.7,259.2 655.0,259.5 655.6,260.5 655.8,261.8 654.6,262.8 654.3,264.0 654.8,265.3 654.8,266.6 655.5,267.7 656.0,268.8 656.5,270.0"/>
<polyline points="637.1,258.9 638.4,259.3 639.7,259.4 640.9,259.4 642.2,258.6 643.5,258.9 644.6,259.6 645.7,260.0 646.9,259.7 648.3,259.1 649.4,259.6 650.4,260.5 651.6,260.5"/>
<polyline points="639.5,225.0 640.0,226.2 639.7,227.6 640.5,228.7 641.1,229.8 642.4,229.9 643.5,228.9 644.8,229.2 646.0,229.0 647.3,229.2 648.6,229.3 649.9,229.1 651.1,228.0 652.4,228.2 653.2,227.1 654.6,226.5 654.8,225.0"/>
<polyline points="652.4,228.2 652.4,229.6 651.9,230.7 650.8,231.5 651.6,232.7 651.1,234.1 652.0,235.3 651.8,236.7 652.4,237.9 652.8,239.3 653.6,240.3 654.8,241.1 655.5,242.3 654.5,243.5 654.4,244.8 654.5,246.0 654.3,247.2 654.8,248.4 655.3,249.5 656.3,250.1 657.3,250.8 657.3,252.1 658.3,253.0 658.9,254.0 659.9,253.0 661.2,252.9 662.7,253.4 663.7,252.4 663.8,251.2 664.3,250.1 665.2,249.2 665.2,248.0 665.3,246.8 665.6,248.0 666.6,248.7 667.2,249.7 668.4,250.3 668.5,251.6 669.0,250.5 669.8,249.6 671.0,249.2 671.8,248.4 672.2,247.3 672.0,246.0 673.2,245.1 672.8,243.7 673.6,242.8 673.5,241.5 674.6,240.6 675.0,239.5 676.2,239.0 677.4,240.2 678.6,239.3 679.8,239.5 680.7,240.5 682.0,240.5 683.1,241.1"/>
<polyline points="654.8,225.0 655.8,225.8 656.1,227.3 657.5,227.7 658.1,228.9 658.9,229.8 659.7,230.6 660.4,231.7 661.6,232.0 663.1,231.9 663.7,233.1 664.4,234.1 664.3,235.4 665.0,236.4 666.1,237.1 666.6,238.4 667.2,239.7 666.9,241.1 668.1,241.7 668.7,243.1 670.3,243.2 671.0,244.4 670.7,245.8 671.9,247.0 671.8,248.4"/>
<polyline points="670.2,270.0 670.6,268.8 670.8,267.5 670.3,266.2 670.9,265.0 671.0,263.7 672.0,263.2 672.7,262.1 673.8,261.7 674.8,261.2 676.1,260.9 676.6,259.7 677.5,258.9 678.4,258.2 679.6,258.2 680.7,257.8 681.7,257.1 683.0,257.2 683.5,255.7 684.7,255.6"/>
<polyline points="662.9,270.0 663.0,268.8 663.1,267.5 662.8,266.2 663.3,265.0 663.4,263.8 663.4,262.5 663.7,261.3 662.6,260.7 661.4,260.2 660.2,260.0 658.9,260.5"/>
<polyline points="697.8,359.1 700.5,357.4 698.0,355.7 700.8,355.7 700.4,354.1"/><polyline points="727.8,370.9 728.9,372.5 729.3,371.8 727.4,371.0 725.3,370.4"/><polyline points="690.1,352.8 692.5,354.2 694.4,353.6 694.1,353.7 695.8,353.0"/><polyline points="711.1,362.4 713.1,361.8 710.1,361.4 712.4,360.1 713.2,358.7"/><polyline points="700.2,363.9 697.8,363.7 698.3,363.2 699.9,364.6 698.5,365.7"/><polyline points="722.0,363.3 722.6,363.6 724.0,364.4 722.6,365.0 723.9,364.8"/><polyline points="728.3,358.0 728.6,358.2 729.3,357.0 730.3,355.5 730.5,355.3"/><polyline points="719.3,368.3 722.2,367.2 724.7,367.1 724.7,365.3 726.8,364.2"/><polyline points="700.5,357.8 698.9,357.0 697.6,357.1 696.8,358.1 699.4,359.8"/><polyline points="704.9,365.0 706.3,365.9 705.7,364.6 707.2,365.3 706.3,365.9"/><polyline points="691.0,366.9 693.4,368.8 691.1,369.5 692.8,368.1 693.4,366.9"/><polyline points="697.8,352.5 696.5,353.9 697.0,355.1 699.8,353.7 701.9,355.3"/><polyline points="717.2,358.3 715.3,358.1 714.5,357.1 715.5,357.7 714.1,356.4"/><polyline points="710.5,365.5 711.4,366.1 713.8,367.1 713.5,368.1 714.5,367.4"/><polyline points="695.5,359.2 696.8,360.2 695.7,360.3 693.1,360.7 692.8,361.8"/><polyline points="726.7,353.0 729.5,351.7 732.3,353.6 730.6,352.8 728.5,354.4"/><polyline points="722.0,370.4 723.9,369.8 725.5,369.2 724.5,368.9 725.7,368.2"/><polyline points="713.2,362.8 715.0,362.7 714.5,362.9 714.3,363.8 711.9,362.5"/><polyline points="689.7,359.8 691.8,360.2 692.6,362.0 694.6,361.2 692.9,361.3"/><polyline points="698.3,363.3 695.8,362.9 697.1,361.9 695.0,362.9 693.2,364.5"/><polyline points="715.6,368.9 715.8,368.8 714.3,367.1 717.0,366.0 714.5,367.7"/><polyline points="712.2,363.0 714.7,364.0 713.2,363.1 714.2,363.8 712.5,362.8"/><polyline points="710.9,353.1 712.7,353.8 710.6,354.1 711.2,352.4 710.8,353.6"/><polyline points="708.5,365.8 706.9,367.8 707.9,368.0 705.0,367.5 702.0,367.2"/><polyline points="696.0,356.6 694.8,355.2 693.5,355.2 691.3,355.5 694.0,356.4"/><polyline points="730.9,354.1 731.9,353.0 734.5,353.0 735.8,354.1 733.6,352.5"/><polyline points="724.5,367.6 724.1,365.7 721.2,366.9 722.4,366.4 723.5,367.6"/><polyline points="688.3,366.2 691.2,367.6 693.5,367.4 694.1,365.9 695.9,366.5"/><polyline points="706.2,352.9 704.3,352.5 706.8,352.4 709.0,351.2 707.5,350.1"/><polyline points="700.9,367.1 700.1,366.4 701.2,366.2 703.5,367.0 705.5,366.7"/><polyline points="705.8,360.6 708.7,362.4 709.1,362.3 706.5,363.8 707.2,363.4"/><polyline points="695.5,360.9 696.8,360.0 695.4,360.1 695.4,358.1 692.7,357.6"/><polyline points="719.9,359.3 717.0,358.2 715.2,359.3 713.5,361.2 712.3,359.9"/><polyline points="688.9,361.3 688.9,362.5 690.0,362.6 687.3,364.3 685.8,363.3"/><polyline points="695.8,363.2 696.7,362.4 695.3,360.5 695.8,361.3 693.6,360.3"/><polyline points="721.8,365.5 719.6,367.4 720.9,368.3 719.9,370.2 719.5,370.7"/><polyline points="732.2,367.9 730.3,366.4 728.5,364.9 730.8,365.0 730.7,364.5"/><polyline points="710.4,360.3 711.7,360.0 713.9,361.4 716.1,362.4 714.1,362.0"/><polyline points="725.8,358.8 726.3,357.6 728.2,357.0 727.4,358.2 724.9,356.2"/><polyline points="707.1,360.5 704.8,360.0 706.4,361.6 708.9,362.7 706.4,362.2"/><polyline points="708.2,352.5 709.8,351.6 711.5,352.4 710.1,351.7 709.8,350.5"/><polyline points="688.5,360.0 686.9,359.0 688.6,360.0 688.1,358.1 689.7,357.2"/><polyline points="692.5,366.3 695.0,365.3 695.2,366.9 695.3,366.3 693.3,364.4"/><polyline points="728.1,367.4 726.2,368.0 724.4,369.0 723.6,369.8 723.8,368.1"/><polyline points="713.6,364.4 710.9,362.6 709.5,363.5 712.4,363.3 714.5,364.1"/><polyline points="700.3,360.5 702.4,360.4 702.4,361.3 700.3,361.1 700.4,361.4"/><polyline points="719.2,357.2 719.0,357.0 716.6,358.1 719.4,358.4 718.8,357.9"/><polyline points="708.4,359.0 707.0,360.8 706.2,359.7 707.2,357.7 706.3,357.9"/><polyline points="724.9,357.8 722.2,359.6 719.2,359.3 719.3,361.3 718.5,360.2"/><polyline points="700.8,359.1 698.7,360.7 698.8,361.7 697.4,362.3 699.9,361.3"/><polyline points="731.0,357.4 732.3,359.2 732.1,360.9 731.5,360.7 734.0,361.1"/><polyline points="690.4,354.8 690.6,354.2 687.9,355.5 686.9,357.1 686.1,355.8"/><polyline points="707.1,367.7 709.5,368.0 708.0,368.1 706.6,367.5 703.6,365.6"/><polyline points="730.0,366.6 728.4,367.0 725.7,368.4 726.3,369.2 725.9,369.0"/><polyline points="724.7,358.0 722.2,356.5 724.7,355.6 722.1,355.9 719.8,355.6"/><polyline points="701.0,390.0 701.9,390.7 703.1,390.5 704.0,391.1 704.8,392.1 706.0,392.0 707.1,392.3 708.1,392.1 708.9,391.0 710.1,391.9 711.0,391.2 712.0,391.0 713.1,390.8 713.9,391.9 715.1,391.1 715.9,392.2 717.1,391.3 718.0,392.0 718.9,391.3 720.0,391.6 721.0,391.5 722.0,391.3 723.0,391.0"/><polyline points="706.0,392.0 705.8,393.1 706.8,393.9 706.2,395.0 706.9,396.0 706.3,397.1 707.0,398.0 707.4,399.1 707.8,400.1 708.9,400.8 708.6,402.2 709.7,402.9 710.0,404.0"/><polyline points="712.0,391.0 712.7,391.9 712.8,393.0 712.7,394.1 713.5,394.9 713.7,396.0 714.0,397.0 714.2,398.0 714.9,398.9 715.3,399.9 715.3,401.0 715.2,402.1 715.5,403.1 716.0,404.0"/><polyline points="718.0,392.0 718.5,392.9 718.1,394.0 718.1,395.1 718.4,396.0 719.2,396.9 719.0,398.0 720.0,398.8 719.5,400.3 720.3,401.1 721.0,402.0"/><polyline points="703.0,396.0 704.1,395.9 704.9,396.7 706.0,396.7 707.0,397.0 708.0,397.0 709.0,396.6 710.0,396.8 711.0,396.3 712.0,396.1 713.0,396.0 714.1,396.1 714.9,396.8 715.9,397.3 717.1,396.9 718.1,396.9 719.1,397.4 720.0,398.0"/><polyline points="708.0,389.0 708.0,390.1 708.8,390.9 709.0,392.0"/><polyline points="715.0,389.0 715.9,389.8 715.3,391.1 716.0,392.0"/>
</g>
<rect x="355" y="181" width="1.2" height="1" fill="#333"/>
<rect x="418" y="169" width="1.2" height="1" fill="#333"/>
<rect x="541" y="182" width="1.2" height="1" fill="#333"/>
<rect x="187" y="474" width="1.2" height="1" fill="#333"/>
<rect x="800" y="487" width="1.2" height="1" fill="#333"/>
<rect x="683" y="162" width="1.2" height="1" fill="#333"/>
<rect x="686" y="164" width="1.2" height="1" fill="#333"/>
<rect x="689" y="166" width="1.2" height="1" fill="#333"/>
<rect x="692" y="165" width="1.2" height="1" fill="#333"/>
<rect x="720.8" y="212.5" width="1.2" height="1" fill="#333"/>
<rect x="730.2" y="215.7" width="1.2" height="1" fill="#333"/>
<rect x="736.5" y="210" width="1.2" height="1" fill="#333"/>
<rect x="738.4" y="213.2" width="1.2" height="1" fill="#333"/>
<rect x="742.8" y="219.4" width="1.2" height="1" fill="#333"/>
<rect x="749" y="218.8" width="1.2" height="1" fill="#333"/>
<rect x="751.6" y="217.6" width="1.2" height="1" fill="#333"/>
<rect x="752.8" y="230.7" width="1.2" height="1" fill="#333"/>
<rect x="725.2" y="221.3" width="1.2" height="1" fill="#333"/>
<rect x="764" y="262" width="1.2" height="1" fill="#333"/>
<rect x="770" y="268" width="1.2" height="1" fill="#333"/>
<rect x="606.5" y="173" width="1.2" height="1" fill="#333"/>
<rect x="612" y="172.5" width="1.2" height="1" fill="#333"/>
<rect x="548" y="208" width="1.2" height="1" fill="#333"/>
<rect x="552" y="204" width="1.2" height="1" fill="#333"/>
<rect x="556" y="202.5" width="1.2" height="1" fill="#333"/>
<rect x="544" y="211" width="1.2" height="1" fill="#333"/>
<rect x="727" y="375" width="1.2" height="1" fill="#333"/>
<rect x="713" y="380" width="1.2" height="1" fill="#333"/>
<rect x="697" y="381" width="1.2" height="1" fill="#333"/>
<rect x="744" y="262" width="1.2" height="1" fill="#333"/>
<rect x="756" y="270" width="1.2" height="1" fill="#333"/>
<rect x="760" y="278" width="1.2" height="1" fill="#333"/>
<rect x="763" y="300" width="1.2" height="1" fill="#333"/>
<g fill="none" stroke="#2e2233" stroke-width="0.8">
<path d="M551.5,206 l1.2,-2.2 l1,1 l1.4,-2.6 l0.8,1.2 l1.6,-2.8 l0.8,1.2 l1.6,-2.4 l1,0.8 l1.8,-2 l1.2,0.8 l2,-1.4 l1.6,0.2"/>
<path d="M544,211 l1.5,-0.8 l1.2,1.2 l1.6,-0.4 l0.8,1.4"/>
<path d="M487,243 l1,-0.8 M492,241.5 l1.2,-0.6 M488,240.5 l0.6,-1"/>
<path d="M589.5,185 l1.2,-2 l1.5,-1 M594,178 l1.5,-1.2 l1.2,0.4"/>
</g>
<rect x="544.2" y="209.6" width="2.6" height="1.8" fill="#2e2233"/>
<polygon points="543.5,212.2 546.8,212.4 548.4,215.2 546.2,217.2 544.6,215" fill="#fff"/>
</svg>

<svg class="a" style="left:120px;top:155px" width="20" height="20" viewBox="120 155 20 20"><path d="M127,160 L127,166.4 L128.5,165 L130,168.6 L131.1,168.1 L129.7,164.7 L131.9,164.7 z" fill="#111" stroke="#fff" stroke-width="0.5"/></svg>
<div class="a" style="left:36px;top:543px;width:964px;height:15px;background:#ececec;border-top:0.5px solid #dcdcdc"></div><div class="a" style="left:38px;top:545px;width:139.7px;height:13px;background:#fff;border:0.6px solid #c8c8c8;border-radius:2px"></div><div class="t" style="left:54px;top:547.3px;font-size:7.8px;color:#a0a0a0;">Type to locate (Ctrl+K)</div><div class="t" style="left:544px;top:549.5px;font-size:6.3px;color:#333;">Coordinate</div><div class="a" style="left:577.6px;top:546px;width:53.3px;height:12px;background:#fff;border:0.6px solid #c8c8c8;border-radius:1.5px"></div><div class="t" style="left:583.6px;top:549.5px;font-size:6.3px;color:#333;">-11.86°, 71.35°</div><div class="t" style="left:648.4px;top:549.5px;font-size:6.3px;color:#333;">Scale</div><div class="a" style="left:665.2px;top:546px;width:49.7px;height:12px;background:#fff;border:0.6px solid #c8c8c8;border-radius:1.5px"></div><div class="t" style="left:666.9px;top:549.5px;font-size:6.3px;color:#333;">1:19609468</div><div class="t" style="left:732.4px;top:549.5px;font-size:6.3px;color:#333;">Magnifier</div><div class="a" style="left:762.4px;top:546px;width:48px;height:12px;background:#fff;border:0.6px solid #c8c8c8;border-radius:1.5px"></div><div class="t" style="left:764.8px;top:549.5px;font-size:6.3px;color:#333;">100%</div><div class="t" style="left:815.7px;top:549.5px;font-size:6.3px;color:#333;">Rotation</div><div class="a" style="left:845.2px;top:546px;width:48px;height:12px;background:#fff;border:0.6px solid #c8c8c8;border-radius:1.5px"></div><div class="t" style="left:847.6px;top:549.5px;font-size:6.3px;color:#333;">0.0 °</div><div class="t" style="left:907.6px;top:549.5px;font-size:6.3px;color:#333;">Render</div><div class="t" style="left:946px;top:549.5px;font-size:6.3px;color:#333;">EPSG:4283</div><svg class="a" style="left:0;top:0" width="1000" height="558" viewBox="0 0 1000 558"><circle cx="45" cy="550.8" r="2.4" fill="none" stroke="#888" stroke-width="0.8"/><path d="M46.7,552.5 L48.7,554.5" stroke="#888" stroke-width="0.9"/><circle cx="637" cy="551.5" r="3.5" fill="none" stroke="#555" stroke-width="0.9"/><path d="M634,548.5 L640,554.5" stroke="#555" stroke-width="0.9"/><path d="M704.8,548 V557" stroke="#ddd" stroke-width="0.6"/><path d="M708,551 h3.4 l-1.7,1.8 z" fill="#444"/><rect x="721.5" y="551" width="6" height="5" rx="0.8" fill="#555"/><path d="M722.8,551 v-1.5 a1.8,1.8 0 0 1 3.6,0 v1.5" stroke="#555" stroke-width="0.9" fill="none"/><path d="M803.5,548 V557" stroke="#ddd" stroke-width="0.6"/><path d="M805.0,550.5 l1.5,-1.6 l1.5,1.6 M805.0,553.5 l1.5,1.6 l1.5,-1.6" stroke="#555" stroke-width="0.7" fill="none"/><path d="M887.5,548 V557" stroke="#ddd" stroke-width="0.6"/><path d="M889.0,550.5 l1.5,-1.6 l1.5,1.6 M889.0,553.5 l1.5,1.6 l1.5,-1.6" stroke="#555" stroke-width="0.7" fill="none"/><rect x="898.3" y="547.5" width="7" height="8" fill="#fff" stroke="#999" stroke-width="0.6"/><path d="M899.5,551.5 l1.5,2.5 l3,-5" stroke="#222" stroke-width="0.9" fill="none"/><ellipse cx="940" cy="551.8" rx="3.8" ry="3.5" fill="#8a8a8a"/><path d="M936.2,551.8 h7.6" stroke="#ccc" stroke-width="0.6"/><ellipse cx="993" cy="551" rx="4" ry="3.3" fill="#555"/><path d="M991,553.5 l-1,2.5 l3,-2 z" fill="#555"/><path d="M990.8,551 h4.4" stroke="#ddd" stroke-width="0.6" stroke-dasharray="0.8,0.6"/></svg>
</body></html>
